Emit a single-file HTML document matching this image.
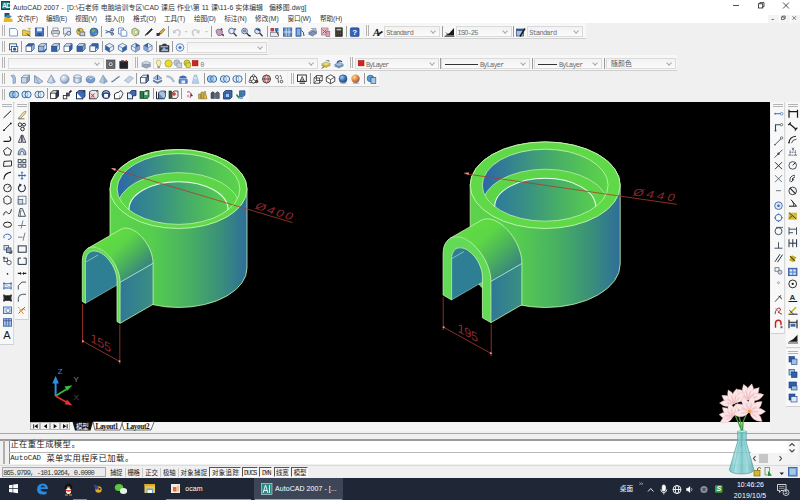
<!DOCTYPE html><html lang="zh"><head><meta charset="utf-8"><title>AutoCAD 2007</title><style>
html,body{margin:0;padding:0}
body{width:800px;height:500px;overflow:hidden;background:#f0f0f0;position:relative;font-family:'Liberation Sans','Noto Sans CJK SC',sans-serif;color:#000}
div,span{position:absolute;box-sizing:border-box;white-space:nowrap}
.tb{background:#f7f7f7;border-bottom:1px solid #cfcfcf;height:16px}
.grip{width:3px;border-left:1px solid #b4b4b4;border-right:1px solid #b4b4b4;height:11px}
.sep{width:1px;background:#9a9a9a;height:11px}
.cb{background:linear-gradient(#f2f2f2,#fbfbfb);border:1px solid #dadada;height:12px}
.cb i{position:absolute;right:3.6px;top:2.4px;width:3.2px;height:3.2px;border-right:0.8px solid #a8a8a8;border-bottom:0.8px solid #a8a8a8;transform:rotate(45deg)}
.cbt{font-family:'Liberation Mono',monospace;font-size:7px;color:#555;line-height:10px;top:0;letter-spacing:-0.2px}
.m{top:11px;height:12px;font-size:7.6px;line-height:12px;color:#111;letter-spacing:-0.1px}
.st{top:467px;height:10px;font-size:7.2px;line-height:9px;color:#111;border:1px solid #9a9a9a;text-align:center;background:#f0f0f0}
.stp{border-color:#555 #fff #fff #555;background:#f4f4f4}
.tk{color:#fff;font-size:7.6px}

</style></head><body>
<div style="left:0;top:0;width:800px;height:23px;background:#fff"></div>
<div style="left:1px;top:1px;width:9px;height:9px;background:#1f7a78;border:1px solid #0f4a4a"></div>
<div style="left:2px;top:1px;font-size:7px;line-height:9px;color:#e8f4f0;font-weight:bold;letter-spacing:-0.8px">AD</div>
<div id="t0" style="left:13px;top:2.75px;height:9.7px;line-height:9.7px;font-size:6.9px;font-family:'Liberation Sans','Noto Sans CJK SC',sans-serif;color:#333;letter-spacing:0.003px;">AutoCAD 2007</div>
<div id="t1" style="left:61.5px;top:2.75px;height:9.7px;line-height:9.7px;font-size:6.9px;font-family:'Liberation Sans','Noto Sans CJK SC',sans-serif;color:#333;letter-spacing:0.703px;">-</div>
<div id="t2" style="left:67px;top:2.55px;height:9.7px;line-height:9.7px;font-size:6.9px;font-family:'Liberation Sans','Noto Sans CJK SC',sans-serif;color:#333;letter-spacing:0.053px;">[D:\石老师 电脑培训专区\CAD 课后 作业\第 11 课\11-6 实体编辑&nbsp;&nbsp; 偏移图.dwg]</div>
<div style="left:768px;top:14.5px;width:10.5px;height:8.5px;background:#f3f3f3"></div><div style="left:779.5px;top:14.5px;width:10.5px;height:8.5px;background:#f3f3f3"></div><div style="left:791px;top:14.5px;width:9px;height:8.5px;background:#f3f3f3"></div>
<svg style="position:absolute;left:640px;top:0" width="160" height="23" viewBox="640 0 160 23"><g stroke="#222" stroke-width="0.8" fill="none"><path d="M733 5.5 H739"/><rect x="758.5" y="3.8" width="4.2" height="4.2"/><path d="M759.8 3.8 V2.6 H764 V6.8 H762.7"/><path d="M783 2.5 L789 8.5 M789 2.5 L783 8.5"/></g><g stroke="#444" stroke-width="0.7" fill="none"><path d="M771.5 19.5 H774"/><rect x="781.5" y="17" width="2.6" height="2.6"/><path d="M782.6 17 V16 H785.2 V18.6 H784.1"/><path d="M792.5 16.2 L796 19.8 M796 16.2 L792.5 19.8"/></g></svg>
<svg style="position:absolute;left:3px;top:12px" width="10" height="11" viewBox="0 0 10 11"><path d="M0.5 10 L1.5 5 L9.5 7 V10Z" fill="#e8b820"/><path d="M1.5 1 H6.5 V6 L1.5 5Z" fill="#2a4a7a"/><path d="M2 4.8 L7 6 L9 4 L4 3Z" fill="#3a8ac0"/></svg>
<div id="t3" style="left:17px;top:13.60px;height:9.4px;line-height:9.4px;font-size:6.7px;font-family:'Liberation Sans','Noto Sans CJK SC',sans-serif;color:#333;letter-spacing:-0.264px;">文件(F)</div>
<div id="t4" style="left:46px;top:13.60px;height:9.4px;line-height:9.4px;font-size:6.7px;font-family:'Liberation Sans','Noto Sans CJK SC',sans-serif;color:#333;letter-spacing:-0.259px;">编辑(E)</div>
<div id="t5" style="left:75px;top:13.60px;height:9.4px;line-height:9.4px;font-size:6.7px;font-family:'Liberation Sans','Noto Sans CJK SC',sans-serif;color:#333;letter-spacing:-0.059px;">视图(V)</div>
<div id="t6" style="left:105px;top:13.60px;height:9.4px;line-height:9.4px;font-size:6.7px;font-family:'Liberation Sans','Noto Sans CJK SC',sans-serif;color:#333;letter-spacing:-0.057px;">插入(I)</div>
<div id="t7" style="left:133px;top:13.60px;height:9.4px;line-height:9.4px;font-size:6.7px;font-family:'Liberation Sans','Noto Sans CJK SC',sans-serif;color:#333;letter-spacing:-0.006px;">格式(O)</div>
<div id="t8" style="left:164px;top:13.60px;height:9.4px;line-height:9.4px;font-size:6.7px;font-family:'Liberation Sans','Noto Sans CJK SC',sans-serif;color:#333;letter-spacing:-0.184px;">工具(T)</div>
<div id="t9" style="left:194px;top:13.60px;height:9.4px;line-height:9.4px;font-size:6.7px;font-family:'Liberation Sans','Noto Sans CJK SC',sans-serif;color:#333;letter-spacing:-0.234px;">绘图(D)</div>
<div id="t10" style="left:224.2px;top:13.60px;height:9.4px;line-height:9.4px;font-size:6.7px;font-family:'Liberation Sans','Noto Sans CJK SC',sans-serif;color:#333;letter-spacing:-0.014px;">标注(N)</div>
<div id="t11" style="left:255px;top:13.60px;height:9.4px;line-height:9.4px;font-size:6.7px;font-family:'Liberation Sans','Noto Sans CJK SC',sans-serif;color:#333;letter-spacing:0.079px;">修改(M)</div>
<div id="t12" style="left:287.5px;top:13.60px;height:9.4px;line-height:9.4px;font-size:6.7px;font-family:'Liberation Sans','Noto Sans CJK SC',sans-serif;color:#333;letter-spacing:-0.171px;">窗口(W)</div>
<div id="t13" style="left:320px;top:13.60px;height:9.4px;line-height:9.4px;font-size:6.7px;font-family:'Liberation Sans','Noto Sans CJK SC',sans-serif;color:#333;letter-spacing:-0.134px;">帮助(H)</div>
<div class="tb" style="left:0px;top:23px;width:363px"></div>
<div class="tb" style="left:364px;top:23px;width:222px"></div>
<div class="tb" style="left:0px;top:39px;width:268px"></div>
<div class="tb" style="left:0px;top:55px;width:132px"></div>
<div class="tb" style="left:133px;top:55px;width:214px"></div>
<div class="tb" style="left:348px;top:55px;width:329px"></div>
<div class="tb" style="left:0px;top:71px;width:287px"></div>
<div class="tb" style="left:288px;top:71px;width:91px"></div>
<div class="tb" style="left:0px;top:87px;width:249px"></div>
<div class="grip" style="left:2px;top:25px"></div>
<div class="sep" style="left:47px;top:25.5px"></div>
<div class="sep" style="left:101px;top:25.5px"></div>
<div class="sep" style="left:168px;top:25.5px"></div>
<div class="sep" style="left:211px;top:25.5px"></div>
<div class="sep" style="left:267px;top:25.5px"></div>
<div class="sep" style="left:346px;top:25.5px"></div>
<div class="grip" style="left:366px;top:25px"></div>
<div class="sep" style="left:441.5px;top:25.5px"></div>
<div class="sep" style="left:512.5px;top:25.5px"></div>
<div class="cb" style="left:384px;top:26px;width:56px;height:11.2px"><i></i></div>
<div id="t14" style="left:386.2px;top:29.05px;height:9.7px;line-height:9.7px;font-size:6.9px;font-family:'Liberation Mono','Noto Sans CJK SC',monospace;color:#6a6a6a;letter-spacing:-0.762px;">Standard</div>
<div class="cb" style="left:456px;top:26px;width:56px;height:11.2px"><i></i></div>
<div id="t15" style="left:457.6px;top:29.05px;height:9.7px;line-height:9.7px;font-size:6.9px;font-family:'Liberation Mono','Noto Sans CJK SC',monospace;color:#6a6a6a;letter-spacing:-0.819px;">ISO-25</div>
<div class="cb" style="left:527px;top:26px;width:56px;height:11.2px"><i></i></div>
<div id="t16" style="left:529.3px;top:29.05px;height:9.7px;line-height:9.7px;font-size:6.9px;font-family:'Liberation Mono','Noto Sans CJK SC',monospace;color:#6a6a6a;letter-spacing:-0.737px;">Standard</div>
<div class="grip" style="left:2px;top:41px"></div>
<div class="sep" style="left:21px;top:41px"></div>
<div class="sep" style="left:101.5px;top:41px"></div>
<div class="sep" style="left:155.5px;top:41px"></div>
<div class="sep" style="left:172px;top:41px"></div>
<div class="cb" style="left:187px;top:42px;width:80px;height:11.2px"><i></i></div>
<div class="grip" style="left:2px;top:57px"></div>
<div class="cb" style="left:8px;top:58px;width:96px;height:11.2px"><i></i></div>
<div class="grip" style="left:135px;top:57px"></div>
<div class="cb" style="left:153px;top:58px;width:165px;height:11.2px"><i></i></div>
<div id="t17" style="left:200.3px;top:61.05px;height:9.7px;line-height:9.7px;font-size:6.9px;font-family:'Liberation Mono','Noto Sans CJK SC',monospace;color:#777;letter-spacing:-0.841px;">0</div>
<div class="grip" style="left:350px;top:57px"></div>
<div class="cb" style="left:355px;top:58px;width:84px;height:11.2px"><i></i></div>
<div id="t18" style="left:366px;top:61.05px;height:9.7px;line-height:9.7px;font-size:6.9px;font-family:'Liberation Mono','Noto Sans CJK SC',monospace;color:#6a6a6a;letter-spacing:-0.922px;">ByLayer</div>
<div class="sep" style="left:439.5px;top:58px"></div>
<div class="cb" style="left:441px;top:58px;width:89px;height:11.2px"><i></i><span style="left:3px;top:4.5px;width:33px;height:1px;background:#333"></span></div>
<div id="t19" style="left:480px;top:61.05px;height:9.7px;line-height:9.7px;font-size:6.9px;font-family:'Liberation Mono','Noto Sans CJK SC',monospace;color:#6a6a6a;letter-spacing:-0.779px;">ByLayer</div>
<div class="sep" style="left:531.5px;top:58px"></div>
<div class="cb" style="left:534px;top:58px;width:68px;height:11.2px"><i></i><span style="left:3px;top:4.5px;width:19px;height:1px;background:#333"></span></div>
<div id="t20" style="left:559px;top:61.05px;height:9.7px;line-height:9.7px;font-size:6.9px;font-family:'Liberation Mono','Noto Sans CJK SC',monospace;color:#6a6a6a;letter-spacing:-0.779px;">ByLayer</div>
<div class="sep" style="left:604px;top:58px"></div>
<div class="cb" style="left:606px;top:58px;width:70px;height:11.2px"><i></i></div>
<div id="t21" style="left:611px;top:59.45px;height:9.5px;line-height:9.5px;font-size:6.8px;font-family:'Liberation Sans','Noto Sans CJK SC',sans-serif;color:#555;letter-spacing:0.203px;">随颜色</div>
<div class="grip" style="left:2px;top:73px"></div>
<div class="sep" style="left:136px;top:72.5px"></div>
<div class="sep" style="left:203.5px;top:72.5px"></div>
<div class="sep" style="left:245px;top:72.5px"></div>
<div class="grip" style="left:291px;top:73px"></div>
<div class="sep" style="left:309.5px;top:72.5px"></div>
<div class="sep" style="left:364px;top:72.5px"></div>
<div class="grip" style="left:2px;top:89px"></div>
<div class="sep" style="left:47px;top:88px"></div>
<div class="sep" style="left:152.5px;top:88px"></div>
<div class="sep" style="left:181px;top:88px"></div>
<div style="left:0;top:102px;width:14px;height:243px;background:#f8f8f8;border-right:1px solid #d8d8d8;border-bottom:1px solid #d0d0d0"></div>
<div style="left:15px;top:102px;width:14px;height:218px;background:#f8f8f8;border-right:1px solid #d8d8d8;border-bottom:1px solid #d0d0d0"></div>
<div style="left:771px;top:102px;width:14px;height:232px;background:#f8f8f8;border-right:1px solid #d8d8d8;border-bottom:1px solid #d0d0d0"></div>
<div style="left:786px;top:102px;width:14px;height:246px;background:#f8f8f8;border-bottom:1px solid #d0d0d0"></div>
<div style="left:786px;top:349px;width:14px;height:58px;background:#f8f8f8;border-bottom:1px solid #d0d0d0"></div>
<div style="left:2px;top:104px;width:10px;height:3px;border-top:1px solid #b4b4b4;border-bottom:1px solid #b4b4b4"></div>
<div style="left:17px;top:104px;width:10px;height:3px;border-top:1px solid #b4b4b4;border-bottom:1px solid #b4b4b4"></div>
<div style="left:773px;top:104px;width:10px;height:3px;border-top:1px solid #b4b4b4;border-bottom:1px solid #b4b4b4"></div>
<div style="left:788px;top:104px;width:10px;height:3px;border-top:1px solid #b4b4b4;border-bottom:1px solid #b4b4b4"></div>
<div style="left:788px;top:351px;width:10px;height:3px;border-top:1px solid #b4b4b4;border-bottom:1px solid #b4b4b4"></div>
<div style="left:30px;top:102.3px;width:740px;height:319.7px;background:#000"></div>
<svg width="740" height="319" viewBox="30 102 740 319" style="position:absolute;left:30px;top:102px">
<defs>
<linearGradient id="bodya" gradientUnits="userSpaceOnUse" x1="110.0" y1="0" x2="247.0" y2="0">
<stop offset="0" stop-color="#5bd44a"/><stop offset="0.3" stop-color="#56ce4e"/><stop offset="0.58" stop-color="#48b062"/><stop offset="0.8" stop-color="#3a9079"/><stop offset="1" stop-color="#2e6e9a"/></linearGradient>
<linearGradient id="inwa" gradientUnits="userSpaceOnUse" x1="117.1" y1="0" x2="239.9" y2="0">
<stop offset="0" stop-color="#2c66a8"/><stop offset="0.25" stop-color="#36868c"/><stop offset="0.55" stop-color="#46aa6a"/><stop offset="0.85" stop-color="#55c852"/><stop offset="1" stop-color="#5bd44a"/></linearGradient>
<linearGradient id="inw2a" gradientUnits="userSpaceOnUse" x1="129.0" y1="0" x2="228.0" y2="0">
<stop offset="0" stop-color="#2e7a9c"/><stop offset="0.3" stop-color="#388f84"/><stop offset="0.6" stop-color="#46ac68"/><stop offset="0.9" stop-color="#54c654"/><stop offset="1" stop-color="#58cc50"/></linearGradient>
<linearGradient id="htopa" gradientUnits="userSpaceOnUse" x1="103.6" y1="237.4" x2="136.6" y2="272.8">
<stop offset="0" stop-color="#60dc42"/><stop offset="0.35" stop-color="#5cd646"/><stop offset="0.7" stop-color="#4ab05c"/><stop offset="1" stop-color="#3a8a7c"/></linearGradient>
<linearGradient id="hwalla" gradientUnits="userSpaceOnUse" x1="120.1" y1="0" x2="153.1" y2="0">
<stop offset="0" stop-color="#2f7896"/><stop offset="1" stop-color="#3a8f82"/></linearGradient>
</defs>
<path d="M110.0 189 A68.5 39.5 0 0 1 247.0 189 L247.0 268 A68.5 39.5 0 0 1 110.0 268Z" fill="url(#bodya)" stroke="#c8f5b0" stroke-width="0.8"/>
<ellipse cx="178.5" cy="189" rx="68.5" ry="39.5" fill="#5fd948" stroke="#c8f5b0" stroke-width="0.9"/>
<clipPath id="cina"><ellipse cx="178.5" cy="189" rx="61.4" ry="35.4"/></clipPath>
<g clip-path="url(#cina)">
<rect x="117.1" y="153.6" width="122.8" height="70.8" fill="url(#inwa)"/>
<ellipse cx="178.5" cy="208" rx="61.4" ry="35.4" fill="#5cd548" stroke="#c8f5b0" stroke-width="0.7"/>
<ellipse cx="178.5" cy="209.5" rx="49.5" ry="27.8" fill="url(#inw2a)" stroke="#e8fff0" stroke-width="1.1"/>
</g>
<ellipse cx="178.5" cy="189" rx="61.4" ry="35.4" fill="none" stroke="#c8f5b0" stroke-width="0.8"/>
<path d="M87.9 248.3 L120.9 229.3 L122.7 228.5 L124.8 228.1 L127.0 228.1 L129.3 228.6 L131.7 229.4 L134.2 230.6 L136.7 232.2 L139.1 234.2 L141.4 236.5 L143.6 239.0 L145.7 241.8 L147.5 244.7 L149.2 247.8 L150.5 250.9 L151.6 254.1 L152.4 257.3 L152.9 260.3 L153.1 263.3 L120.1 282.3 L119.9 279.3 L119.4 276.3 L118.6 273.1 L117.5 269.9 L116.2 266.8 L114.5 263.7 L112.7 260.8 L110.6 258.0 L108.4 255.5 L106.1 253.2 L103.7 251.2 L101.2 249.6 L98.7 248.4 L96.3 247.6 L94.0 247.1 L91.8 247.1 L89.7 247.5 L87.9 248.3Z" fill="url(#htopa)"/>
<path d="M120.1 282.3 L153.1 263.3 L153.1 304.3 L120.1 323.3Z" fill="url(#hwalla)"/>
<path d="M85.4 303.3 L85.4 262.3 L85.5 260.0 L85.9 257.9 L86.6 256.0 L87.5 254.4 L88.7 253.1 L90.0 252.0 L91.6 251.4 L93.3 251.0 L95.2 251.1 L97.1 251.4 L99.1 252.1 L101.2 253.2 L103.3 254.5 L105.3 256.1 L107.2 258.0 L109.1 260.2 L110.8 262.5 L112.4 264.9 L113.7 267.5 L114.9 270.2 L115.8 272.8 L116.5 275.5 L116.9 278.1 L117.0 280.5 L117.0 285.0Z" fill="#2f7f94"/>
<path d="M85.4 262.3 l12.6 -7.3" stroke="#9fdcc8" stroke-width="0.7" fill="none"/>
<path d="M82.3 301.5 L82.3 260.5 L82.5 257.8 L83.0 255.3 L83.8 253.0 L84.9 251.1 L86.2 249.5 L87.9 248.3 L89.7 247.5 L91.8 247.1 L94.0 247.1 L96.3 247.6 L98.7 248.4 L101.2 249.6 L103.7 251.2 L106.1 253.2 L108.4 255.5 L110.6 258.0 L112.7 260.8 L114.5 263.7 L116.2 266.8 L117.5 269.9 L118.6 273.1 L119.4 276.3 L119.9 279.3 L120.1 282.3 L120.1 323.3 L117.0 321.5 L117.0 280.5 L116.9 278.1 L116.5 275.5 L115.8 272.8 L114.9 270.2 L113.7 267.5 L112.4 264.9 L110.8 262.5 L109.1 260.2 L107.2 258.0 L105.3 256.1 L103.3 254.5 L101.2 253.2 L99.1 252.1 L97.1 251.4 L95.2 251.1 L93.3 251.0 L91.6 251.4 L90.0 252.0 L88.7 253.1 L87.5 254.4 L86.6 256.0 L85.9 257.9 L85.5 260.0 L85.4 262.3 L85.4 303.3Z" fill="#62da58" stroke="#c8f5b0" stroke-width="0.8" stroke-linejoin="round"/>
<path d="M87.9 248.3 L120.9 229.3 L122.7 228.5 L124.8 228.1 L127.0 228.1 L129.3 228.6 L131.7 229.4 L134.2 230.6 L136.7 232.2 L139.1 234.2 L141.4 236.5 L143.6 239.0 L145.7 241.8 L147.5 244.7 L149.2 247.8 L150.5 250.9 L151.6 254.1 L152.4 257.3 L152.9 260.3 L153.1 263.3 L153.1 304.3 L120.1 323.3" fill="none" stroke="#c8f5b0" stroke-width="0.8"/>
<path d="M120.1 282.3 L153.1 263.3" stroke="#bfeee0" stroke-width="0.8"/>
<path d="M85.4 303.3 L117.0 285.0" stroke="#9fdcc8" stroke-width="0.6"/>
<defs>
<linearGradient id="bodyb" gradientUnits="userSpaceOnUse" x1="470.20000000000005" y1="0" x2="620.2" y2="0">
<stop offset="0" stop-color="#5bd44a"/><stop offset="0.3" stop-color="#56ce4e"/><stop offset="0.58" stop-color="#48b062"/><stop offset="0.8" stop-color="#3a9079"/><stop offset="1" stop-color="#2e6e9a"/></linearGradient>
<linearGradient id="inwb" gradientUnits="userSpaceOnUse" x1="482.30000000000007" y1="0" x2="608.1" y2="0">
<stop offset="0" stop-color="#2c66a8"/><stop offset="0.25" stop-color="#36868c"/><stop offset="0.55" stop-color="#46aa6a"/><stop offset="0.85" stop-color="#55c852"/><stop offset="1" stop-color="#5bd44a"/></linearGradient>
<linearGradient id="inw2b" gradientUnits="userSpaceOnUse" x1="494.70000000000005" y1="0" x2="595.7" y2="0">
<stop offset="0" stop-color="#2e7a9c"/><stop offset="0.3" stop-color="#388f84"/><stop offset="0.6" stop-color="#46ac68"/><stop offset="0.9" stop-color="#54c654"/><stop offset="1" stop-color="#58cc50"/></linearGradient>
<linearGradient id="htopb" gradientUnits="userSpaceOnUse" x1="464.6" y1="227.6" x2="506.4" y2="272.4">
<stop offset="0" stop-color="#60dc42"/><stop offset="0.35" stop-color="#5cd646"/><stop offset="0.7" stop-color="#4ab05c"/><stop offset="1" stop-color="#3a8a7c"/></linearGradient>
<linearGradient id="hwallb" gradientUnits="userSpaceOnUse" x1="490.9" y1="0" x2="521.9" y2="0">
<stop offset="0" stop-color="#2f7896"/><stop offset="1" stop-color="#3a8f82"/></linearGradient>
</defs>
<path d="M470.20000000000005 185.2 A75 43.3 0 0 1 620.2 185.2 L620.2 264.2 A75 43.3 0 0 1 470.20000000000005 264.2Z" fill="url(#bodyb)" stroke="#c8f5b0" stroke-width="0.8"/>
<ellipse cx="545.2" cy="185.2" rx="75" ry="43.3" fill="#5fd948" stroke="#c8f5b0" stroke-width="0.9"/>
<clipPath id="cinb"><ellipse cx="545.2" cy="185.2" rx="62.9" ry="36.0"/></clipPath>
<g clip-path="url(#cinb)">
<rect x="482.30000000000007" y="149.2" width="125.8" height="72.0" fill="url(#inwb)"/>
<ellipse cx="545.2" cy="205.2" rx="62.9" ry="36.0" fill="#5cd548" stroke="#c8f5b0" stroke-width="0.7"/>
<ellipse cx="545.2" cy="206.7" rx="50.5" ry="28.4" fill="url(#inw2b)" stroke="#e8fff0" stroke-width="1.1"/>
</g>
<ellipse cx="545.2" cy="185.2" rx="62.9" ry="36.0" fill="none" stroke="#c8f5b0" stroke-width="0.8"/>
<path d="M450.1 238.3 L481.1 220.4 L483.5 219.4 L486.1 218.9 L488.9 218.9 L491.8 219.5 L494.9 220.5 L498.0 222.1 L501.1 224.1 L504.2 226.6 L507.1 229.5 L509.9 232.7 L512.5 236.2 L514.9 239.9 L517.0 243.8 L518.7 247.9 L520.1 251.9 L521.1 255.9 L521.7 259.8 L521.9 263.5 L490.9 281.4 L490.7 277.7 L490.1 273.8 L489.1 269.8 L487.7 265.8 L486.0 261.7 L483.9 257.8 L481.5 254.1 L478.9 250.6 L476.1 247.4 L473.2 244.5 L470.1 242.0 L467.0 240.0 L463.9 238.4 L460.8 237.4 L457.9 236.8 L455.1 236.8 L452.5 237.3 L450.1 238.3Z" fill="url(#htopb)"/>
<path d="M490.9 281.4 L521.9 263.5 L521.9 304.7 L490.9 322.6Z" fill="url(#hwallb)"/>
<path d="M451.6 299.9 L451.6 258.7 L451.7 256.5 L452.1 254.4 L452.8 252.6 L453.7 251.0 L454.8 249.7 L456.1 248.7 L457.6 248.1 L459.3 247.8 L461.1 247.8 L463.0 248.1 L465.0 248.8 L467.0 249.8 L469.0 251.1 L471.0 252.7 L472.9 254.6 L474.7 256.6 L476.4 258.9 L477.9 261.3 L479.2 263.8 L480.3 266.4 L481.2 269.0 L481.9 271.6 L482.3 274.1 L482.4 276.5 L482.4 282.1Z" fill="#2f7f94"/>
<path d="M451.6 258.7 l12.3 -7.1" stroke="#9fdcc8" stroke-width="0.7" fill="none"/>
<path d="M443.1 295.0 L443.1 253.8 L443.3 250.3 L443.9 247.1 L444.9 244.3 L446.3 241.9 L448.0 239.9 L450.1 238.3 L452.5 237.3 L455.1 236.8 L457.9 236.8 L460.8 237.4 L463.9 238.4 L467.0 240.0 L470.1 242.0 L473.2 244.5 L476.1 247.4 L478.9 250.6 L481.5 254.1 L483.9 257.8 L486.0 261.7 L487.7 265.8 L489.1 269.8 L490.1 273.8 L490.7 277.7 L490.9 281.4 L490.9 322.6 L482.4 317.7 L482.4 276.5 L482.3 274.1 L481.9 271.6 L481.2 269.0 L480.3 266.4 L479.2 263.8 L477.9 261.3 L476.4 258.9 L474.7 256.6 L472.9 254.6 L471.0 252.7 L469.0 251.1 L467.0 249.8 L465.0 248.8 L463.0 248.1 L461.1 247.8 L459.3 247.8 L457.6 248.1 L456.1 248.7 L454.8 249.7 L453.7 251.0 L452.8 252.6 L452.1 254.4 L451.7 256.5 L451.6 258.7 L451.6 299.9Z" fill="#62da58" stroke="#c8f5b0" stroke-width="0.8" stroke-linejoin="round"/>
<path d="M450.1 238.3 L481.1 220.4 L483.5 219.4 L486.1 218.9 L488.9 218.9 L491.8 219.5 L494.9 220.5 L498.0 222.1 L501.1 224.1 L504.2 226.6 L507.1 229.5 L509.9 232.7 L512.5 236.2 L514.9 239.9 L517.0 243.8 L518.7 247.9 L520.1 251.9 L521.1 255.9 L521.7 259.8 L521.9 263.5 L521.9 304.7 L490.9 322.6" fill="none" stroke="#c8f5b0" stroke-width="0.8"/>
<path d="M490.9 281.4 L521.9 263.5" stroke="#bfeee0" stroke-width="0.8"/>
<path d="M451.6 299.9 L482.4 282.1" stroke="#9fdcc8" stroke-width="0.6"/>
<g stroke="#b03a2c" stroke-width="0.8" fill="none"><path d="M111.5 168.7 L292.5 222.6"/><path d="M82.5 304 V343 M119.8 325 V364 M82.5 341 L119.8 361.5"/><path d="M464 173.6 L677 204.3"/><path d="M443.2 297 V330 M491.2 324 V356 M443.2 327 L491.2 353.5"/></g>
<g fill="#e8a0a0"><path d="M111 168 l5 0.5 l-1 2.5z"/><path d="M464 172.8 l5 -0.3 l-0.5 2.6z"/><circle cx="83" cy="341.3" r="1"/><circle cx="119.5" cy="361.2" r="1"/><circle cx="443.6" cy="327.3" r="1"/><circle cx="490.8" cy="353.2" r="1"/></g>
<g fill="#8e2830" style="font-family:'Liberation Sans',sans-serif" font-size="10.5"><text transform="translate(254,208.6) rotate(17.5) scale(1.25,1) skewX(-12)" letter-spacing="1.7">Ø400</text><text transform="translate(90.5,341.5) skewY(29)" font-size="12.6" letter-spacing="-0.3">155</text><text transform="translate(632,195.2) rotate(8.3) scale(1.25,1) skewX(-12)" letter-spacing="2.6">Ø440</text><text transform="translate(457.6,331.4) skewY(29)" font-size="12.6" letter-spacing="-0.3">195</text></g>
<g><path d="M55.6 396 V381" stroke="#2f8fe8" stroke-width="2"/><path d="M52.3 383.5 L55.6 376 L58.9 383.5Z" fill="#2f8fe8"/><path d="M55.6 396 L66 389.5" stroke="#35c035" stroke-width="1.6"/><path d="M64.5 386.5 L72.5 385.3 L67 391Z" fill="#35c035"/><path d="M55.6 396 L66 402" stroke="#e03030" stroke-width="1.6"/><path d="M67 399.5 L72.5 405.5 L64.5 404.2Z" fill="#e03030"/><text x="57.8" y="373.5" font-size="8" fill="#3a8fe0" style="font-family:'Liberation Sans',sans-serif">Z</text><text x="73.5" y="382" font-size="8" fill="#8a8a8a" style="font-family:'Liberation Sans',sans-serif">Y</text><text x="73.5" y="399.5" font-size="8" fill="#7a3a30" style="font-family:'Liberation Sans',sans-serif">X</text></g>
</svg>
<div style="left:30px;top:422px;width:740px;height:8.5px;background:#f4f4f4"></div>
<div style="left:30px;top:422px;width:10px;height:8.3px;border:1px solid #b8b8b8;background:#f2f2f2"></div>
<div style="left:40px;top:422px;width:10px;height:8.3px;border:1px solid #b8b8b8;background:#f2f2f2"></div>
<div style="left:50px;top:422px;width:10px;height:8.3px;border:1px solid #b8b8b8;background:#f2f2f2"></div>
<div style="left:60px;top:422px;width:10px;height:8.3px;border:1px solid #b8b8b8;background:#f2f2f2"></div>
<svg style="position:absolute;left:30px;top:421px" width="130" height="11" viewBox="30 421 130 11"><g fill="#111"><path d="M33.2 424.2 V428.4 h0.9 V424.2Z M37.7 424 V428.6 L34.4 426.3Z"/><path d="M47 424 V428.6 L43.7 426.3Z"/><path d="M53.7 424 V428.6 L57 426.3Z"/><path d="M63 424 V428.6 L66.3 426.3Z M66.7 424.2 V428.4 h0.9 V424.2Z"/></g><path d="M72.5 421.8 L75 430.4 H90.5 L93 421.8Z" fill="#111"/><path d="M93 421.8 L95 430 H120 L122.6 421.8 M122 423.5 L124 430 H151 L154 421.8" fill="#fff" stroke="#333" stroke-width="0.7"/></svg>
<div id="t22" style="left:76px;top:421.65px;height:9.1px;line-height:9.1px;font-size:6.5px;font-family:'Liberation Sans','Noto Sans CJK SC',sans-serif;color:#fff;letter-spacing:-0.200px;">模型</div>
<div id="t23" style="left:95.6px;top:421.65px;height:10.1px;line-height:10.1px;font-size:7.2px;font-family:'Liberation Serif',serif;color:#111;letter-spacing:-0.452px;font-weight:bold;">Layout1</div>
<div id="t24" style="left:126.2px;top:421.65px;height:10.1px;line-height:10.1px;font-size:7.2px;font-family:'Liberation Serif',serif;color:#111;letter-spacing:-0.366px;font-weight:bold;">Layout2</div>
<div style="left:0;top:432.6px;width:800px;height:1.6px;background:#a6a6a6"></div>
<div style="left:0;top:439px;width:800px;height:1.6px;background:#9a9a9a"></div>
<div style="left:9px;top:440.5px;width:789px;height:23.5px;background:#fff;border-left:1px solid #888"></div>
<div style="left:9px;top:451.8px;width:742px;height:1.2px;background:#b8b8b8"></div>
<div style="left:3px;top:440px;width:2px;height:24px;border-left:1px solid #b0b0b0;border-right:1px solid #b0b0b0"></div>
<div id="t25" style="left:10.4px;top:438.50px;height:11.6px;line-height:11.6px;font-size:8.3px;font-family:'Liberation Mono','Noto Sans CJK SC',monospace;color:#222;letter-spacing:0.387px;">正在重生成模型</div>
<div id="t26" style="left:71.5px;top:438.50px;height:11.6px;line-height:11.6px;font-size:8.3px;font-family:'Liberation Mono','Noto Sans CJK SC',monospace;color:#222;letter-spacing:0.188px;">。</div>
<div id="t27" style="left:10.2px;top:453.10px;height:10.4px;line-height:10.4px;font-size:7.4px;font-family:'Liberation Mono','Noto Sans CJK SC',monospace;color:#222;letter-spacing:-0.035px;">AutoCAD</div>
<div id="t28" style="left:46.4px;top:452.50px;height:11.6px;line-height:11.6px;font-size:8.3px;font-family:'Liberation Mono','Noto Sans CJK SC',monospace;color:#222;letter-spacing:0.390px;">菜单实用程序已加载</div>
<div id="t29" style="left:125px;top:452.50px;height:11.6px;line-height:11.6px;font-size:8.3px;font-family:'Liberation Mono','Noto Sans CJK SC',monospace;color:#222;letter-spacing:-0.312px;">。</div>
<div style="left:787px;top:440.6px;width:11px;height:12px;background:#f8f8f8"></div>
<div style="left:751px;top:453px;width:47px;height:11px;background:#f3f3f3"></div>
<div style="left:758.5px;top:454px;width:9.5px;height:9px;background:#c6c6c6"></div>
<svg style="position:absolute;left:750px;top:440px" width="50" height="25" viewBox="750 440 50 25"><g fill="none" stroke="#444" stroke-width="1.1"><path d="M789.5 446 L792 443.5 L794.5 446"/><path d="M789.5 449.5 L792 452 L794.5 449.5"/><path d="M755.5 456 L753.5 458.5 L755.5 461"/><path d="M779.5 456 L781.5 458.5 L779.5 461"/></g></svg>
<div style="left:0;top:465px;width:800px;height:13px;background:#f0f0f0;border-top:1px solid #dcdcdc"></div>
<div style="left:2px;top:467px;width:104px;height:10px;border:1px solid #a8a8a8;background:#ebebeb"></div>
<div id="t30" style="left:3.2px;top:468.70px;height:9.8px;line-height:9.8px;font-size:7px;font-family:'Liberation Mono','Noto Sans CJK SC',monospace;color:#333;letter-spacing:-0.838px;">865.9799, -101.9264, 0.0000</div>
<div style="left:124.5px;top:468px;width:1px;height:9px;background:#c8c8c8"></div>
<div id="t31" style="left:110px;top:467.70px;height:9.0px;line-height:9.0px;font-size:6.4px;font-family:'Liberation Sans','Noto Sans CJK SC',sans-serif;color:#222;letter-spacing:-0.491px;">捕捉</div>
<div style="left:142px;top:468px;width:1px;height:9px;background:#c8c8c8"></div>
<div id="t32" style="left:127.4px;top:467.70px;height:9.0px;line-height:9.0px;font-size:6.4px;font-family:'Liberation Sans','Noto Sans CJK SC',sans-serif;color:#222;letter-spacing:-0.291px;">栅格</div>
<div style="left:160.0px;top:468px;width:1px;height:9px;background:#c8c8c8"></div>
<div id="t33" style="left:145.2px;top:467.70px;height:9.0px;line-height:9.0px;font-size:6.4px;font-family:'Liberation Sans','Noto Sans CJK SC',sans-serif;color:#222;letter-spacing:-0.191px;">正交</div>
<div style="left:178.0px;top:468px;width:1px;height:9px;background:#c8c8c8"></div>
<div id="t34" style="left:163px;top:467.70px;height:9.0px;line-height:9.0px;font-size:6.4px;font-family:'Liberation Sans','Noto Sans CJK SC',sans-serif;color:#222;letter-spacing:-0.091px;">极轴</div>
<div style="left:209.0px;top:468px;width:1px;height:9px;background:#c8c8c8"></div>
<div id="t35" style="left:180.5px;top:467.70px;height:9.0px;line-height:9.0px;font-size:6.4px;font-family:'Liberation Sans','Noto Sans CJK SC',sans-serif;color:#222;letter-spacing:0.334px;">对象捕捉</div>
<div class="st stp" style="left:209.4px;width:31.3px"></div>
<div id="t36" style="left:212px;top:467.70px;height:9.0px;line-height:9.0px;font-size:6.4px;font-family:'Liberation Sans','Noto Sans CJK SC',sans-serif;color:#222;letter-spacing:0.409px;">对象追踪</div>
<div class="st stp" style="left:241.6px;width:16.4px"></div>
<div id="t37" style="left:244px;top:468.95px;height:9.5px;line-height:9.5px;font-size:6.8px;font-family:'Liberation Mono','Noto Sans CJK SC',monospace;color:#222;letter-spacing:-1.007px;">DUCS</div>
<div class="st stp" style="left:259.3px;width:12.7px"></div>
<div id="t38" style="left:262px;top:468.95px;height:9.5px;line-height:9.5px;font-size:6.8px;font-family:'Liberation Mono','Noto Sans CJK SC',monospace;color:#222;letter-spacing:-1.283px;">DYN</div>
<div class="st stp" style="left:274px;width:16.2px"></div>
<div id="t39" style="left:276px;top:467.70px;height:9.0px;line-height:9.0px;font-size:6.4px;font-family:'Liberation Sans','Noto Sans CJK SC',sans-serif;color:#222;letter-spacing:-0.141px;">线宽</div>
<div class="st stp" style="left:291.4px;width:16.6px"></div>
<div id="t40" style="left:293.8px;top:467.70px;height:9.0px;line-height:9.0px;font-size:6.4px;font-family:'Liberation Sans','Noto Sans CJK SC',sans-serif;color:#222;letter-spacing:-0.091px;">模型</div>
<svg style="position:absolute;left:750px;top:465px" width="50" height="13" viewBox="750 465 50 13"><rect x="754" y="470.5" width="6" height="5.5" fill="#d8b820" stroke="#6a5a10" stroke-width="0.6"/><path d="M757.5 470.5 V468.5 Q759.5 466.5 761 468.5" fill="none" stroke="#6a5a10" stroke-width="1"/><rect x="765" y="467.5" width="4.5" height="7.5" fill="#e8f0e8" stroke="#3a6a3a" stroke-width="0.6"/><path d="M768 471 L772 475.5 L768 476Z" fill="#2a8a3a"/><path d="M779.5 472.5 H784 L781.7 475Z" fill="#222"/><rect x="788.5" y="467.5" width="8.5" height="8.5" fill="#7aa8d8" stroke="#3a6aa8" stroke-width="1"/><rect x="790" y="469" width="5.5" height="5.5" fill="#a8c8e8"/></svg>
<div style="left:0;top:478px;width:800px;height:22px;background:#1f2635"></div>
<div style="left:254px;top:478px;width:89px;height:22px;background:#3d4656"></div>
<div style="left:255px;top:498.5px;width:87px;height:1.5px;background:#8fa8d0"></div>
<div style="left:166px;top:498.8px;width:85px;height:1.2px;background:#7f98c0"></div>
<div style="left:73px;top:499px;width:14px;height:1px;background:#6f88b0"></div>
<svg style="position:absolute;left:0;top:478px" width="800" height="22" viewBox="0 478 800 22"><g fill="#fff"><path d="M9 485.2 L12.6 484.7 V488.3 H9Z M13.2 484.6 L18 483.9 V488.3 H13.2Z M9 488.9 H12.6 V492.5 L9 492Z M13.2 488.9 H18 V493.3 L13.2 492.6Z"/></g><path d="M37 490 Q37 483.5 43 483.5 Q48 484 48 489 H40.5 Q41 492.5 46.5 491.5 V494 Q38 496 37 490Z M40.5 487.3 H45 Q44.5 485.5 42.7 485.5 Q41 485.7 40.5 487.3Z" fill="#2a8ae0" fill-rule="evenodd"/><ellipse cx="68.5" cy="488.5" rx="4" ry="5" fill="#111"/><ellipse cx="68.5" cy="491" rx="2.6" ry="3" fill="#fff"/><path d="M64.5 489 Q68.5 491.5 72.5 489 L72 490.5 Q68.5 492.8 65 490.5Z" fill="#e02020"/><ellipse cx="68.5" cy="487.2" rx="1.8" ry="0.7" fill="#f0a020"/><path d="M65 494.5 h3 v1 h-3z M69 494.5 h3 v1 h-3z" fill="#f0a020"/><circle cx="98.5" cy="489.5" r="3.2" fill="#e8a828"/><path d="M93.5 485 Q97 484 99 488 L96 490Z" fill="#2a4a98"/><circle cx="99.5" cy="489" r="1" fill="#222"/><ellipse cx="119" cy="487.5" rx="4.2" ry="3.5" fill="#5ac838"/><ellipse cx="123.5" cy="491" rx="3.6" ry="3" fill="#e8f4e4"/><rect x="144.5" y="484" width="10.5" height="9" fill="#f0c848"/><rect x="144.5" y="484" width="10.5" height="2" fill="#e0a828"/><rect x="146.5" y="488.5" width="6.5" height="4.5" fill="#5aa8e8"/><rect x="147.5" y="490" width="4.5" height="3" fill="#f4f4f4"/><rect x="171" y="484" width="9" height="9" fill="#f0ece4"/><rect x="173" y="487" width="3.5" height="4.5" fill="#e86838"/><rect x="177.5" y="485.5" width="1.2" height="6" fill="#e8a848"/><rect x="261.5" y="483.5" width="10.5" height="11" fill="#2a8a88" stroke="#cfe8e4" stroke-width="0.6"/><path d="M263 493 L265.5 485 L268 493 M264 490.5 H267 M269.5 485 V493" stroke="#e8f4f0" stroke-width="1" fill="none"/><g stroke="#fff" stroke-width="0.9" fill="none"><path d="M648 491.5 L650.7 488.5 L653.4 491.5"/><rect x="662.3" y="485" width="3" height="6" rx="1.5" fill="#fff"/><path d="M660.8 489.5 Q661 492.5 663.8 492.5 Q666.6 492.5 666.8 489.5 M663.8 492.5 V494.3"/><circle cx="677" cy="489.5" r="4"/><ellipse cx="677" cy="489.5" rx="1.8" ry="4"/><path d="M673 489.5 H681"/><path d="M686.5 488.3 H688 L690 486.5 V492.5 L688 490.8 H686.5Z" fill="#fff" stroke-width="0.4"/><path d="M691.5 488 Q692.5 489.5 691.5 491" stroke-width="0.6"/></g><circle cx="704" cy="489.5" r="3.6" fill="#8a8f98"/><path d="M702.5 488 L705.5 491 M705.5 488 L702.5 491" stroke="#1f2635" stroke-width="0.9"/><rect x="715" y="485.3" width="7.5" height="7.5" rx="1.3" fill="#28a838"/><path d="M639.5 482.5 l1.2 1.2 l-1.2 1.2 M641.5 482.5 l1.2 1.2 l-1.2 1.2" stroke="#fff" stroke-width="0.6" fill="none"/><path d="M777.5 484.5 H786 V490.5 H781 L779.5 492.5 V490.5 H777.5Z" fill="none" stroke="#fff" stroke-width="0.8"/><path d="M779 486.5 H784.5 M779 488.3 H784.5" stroke="#fff" stroke-width="0.5"/><circle cx="786" cy="492.5" r="3" fill="#1f2635" stroke="#fff" stroke-width="0.7"/></svg>
<div class="tk" style="left:716.6px;top:485px;font-size:7px;line-height:8px;font-weight:bold;font-style:italic;color:#fff">S</div>
<div class="tk" style="left:784.6px;top:489px;font-size:5px;line-height:7px">5</div>
<div id="t41" style="left:185.3px;top:483.90px;height:9.8px;line-height:9.8px;font-size:7px;font-family:'Liberation Sans','Noto Sans CJK SC',sans-serif;color:#fff;letter-spacing:0.044px;">ocam</div>
<div id="t42" style="left:275px;top:483.90px;height:9.8px;line-height:9.8px;font-size:7px;font-family:'Liberation Sans','Noto Sans CJK SC',sans-serif;color:#fff;letter-spacing:0.058px;">AutoCAD 2007 - [...</div>
<div id="t43" style="left:619.8px;top:484.40px;height:9.2px;line-height:9.2px;font-size:6.6px;font-family:'Liberation Sans','Noto Sans CJK SC',sans-serif;color:#fff;letter-spacing:0.006px;">桌面</div>
<div id="t44" style="left:737px;top:479.55px;height:9.7px;line-height:9.7px;font-size:6.9px;font-family:'Liberation Sans','Noto Sans CJK SC',sans-serif;color:#fff;letter-spacing:-0.004px;">10:46:26</div>
<div id="t45" style="left:733.8px;top:490.65px;height:9.7px;line-height:9.7px;font-size:6.9px;font-family:'Liberation Sans','Noto Sans CJK SC',sans-serif;color:#fff;letter-spacing:0.216px;">2019/10/5</div>
<svg style="position:absolute;left:0;top:0" width="800" height="110" viewBox="0 0 800 110"><defs><radialGradient id="gsph" cx="0.35" cy="0.3" r="0.8"><stop offset="0" stop-color="#f4f7fc"/><stop offset="0.6" stop-color="#a8bad8"/><stop offset="1" stop-color="#6a80b0"/></radialGradient><linearGradient id="gcyl" x1="0" x2="1" y1="0" y2="0"><stop offset="0" stop-color="#9ab0d0"/><stop offset="0.4" stop-color="#eef2f8"/><stop offset="1" stop-color="#8aa0c4"/></linearGradient><radialGradient id="gblue" cx="0.35" cy="0.3" r="0.8"><stop offset="0" stop-color="#a8d0f0"/><stop offset="0.5" stop-color="#3a78c0"/><stop offset="1" stop-color="#1a3a78"/></radialGradient><radialGradient id="gorange" cx="0.35" cy="0.3" r="0.8"><stop offset="0" stop-color="#fcd8a0"/><stop offset="0.5" stop-color="#e88830"/><stop offset="1" stop-color="#5a4a8a"/></radialGradient></defs><g transform="translate(9,27.5)"><path d="M0.6 1 H6.5 L8.5 3 V8.5 H0.6Z" fill="#fdfdff" stroke="#6f8fb8" stroke-width="0.9"/></g><g transform="translate(22,27.5)"><path d="M0.5 2.5 H3.5 L4.5 3.5 H8 V8 H0.5Z" fill="#e9c84a" stroke="#9a8230" stroke-width="0.7"/><path d="M5.5 1 L8.5 0.5 L7.5 3" fill="#f4e38a" stroke="#9a8230" stroke-width="0.5"/><path d="M5 6 L8 9" stroke="#222" stroke-width="1"/></g><g transform="translate(35,27.5)"><rect x="0.5" y="0.5" width="8" height="8" fill="#4a78c0" stroke="#2f4f90" stroke-width="0.8"/><rect x="2" y="0.8" width="5" height="3" fill="#dfe8f5"/><rect x="2.5" y="5.5" width="4" height="3" fill="#2f4f90"/></g><g transform="translate(51,27.5)"><rect x="2" y="0.5" width="5" height="3" fill="#fff" stroke="#778" stroke-width="0.7"/><rect x="0.5" y="3.2" width="8" height="3.6" rx="0.8" fill="#c8cdd8" stroke="#667" stroke-width="0.8"/><rect x="2" y="6" width="5" height="2.6" fill="#fff" stroke="#778" stroke-width="0.6"/></g><g transform="translate(63,27.5)"><rect x="0.5" y="0.5" width="7" height="6" fill="#e8edf5" stroke="#6a7fa0" stroke-width="0.8"/><circle cx="5.8" cy="5.8" r="2" fill="#cfe0f5" stroke="#556" stroke-width="0.8"/><path d="M3 7 L1.5 9" stroke="#556" stroke-width="1"/></g><g transform="translate(76,27.5)"><circle cx="4" cy="4" r="3.3" fill="#e8d050" stroke="#7a7040" stroke-width="0.8"/><rect x="4" y="4.5" width="4.8" height="3.8" fill="#c8ccd5" stroke="#555" stroke-width="0.7"/><circle cx="3" cy="3" r="1.2" fill="#6a7a40"/></g><g transform="translate(89.5,27.5)"><circle cx="4.5" cy="4.5" r="4" fill="#4a80c8" stroke="#2a4f80" stroke-width="0.7"/><path d="M2 3 Q4 1 6 2.5 Q5 5 3 5Z" fill="#7ab06a"/><path d="M5 6 Q7 5 8 6 L6 8Z" fill="#7ab06a"/><path d="M0.5 8 Q3 9.5 5 8.5" stroke="#889" stroke-width="0.9" fill="none"/></g><g transform="translate(105,27.5)"><path d="M0.5 3 L8 6 M0.5 5.5 L8 2.5" stroke="#4a6a9a" stroke-width="1"/><circle cx="7.3" cy="2.3" r="1.3" fill="none" stroke="#3a5080" stroke-width="0.9"/><circle cx="7.3" cy="6.4" r="1.3" fill="none" stroke="#3a5080" stroke-width="0.9"/></g><g transform="translate(118,27.5)"><path d="M0.5 0.5 H5.5 V6.5 H0.5Z" fill="#f4f7fc" stroke="#5a7fb5" stroke-width="0.8"/><path d="M3 2.5 H7 L8.8 4.2 V8.7 H3Z" fill="#fbfcff" stroke="#5a7fb5" stroke-width="0.8"/></g><g transform="translate(131,27.5)"><path d="M1 2 L4 0.5 L8 3 L7.5 7 L3.5 8.5 L1 6Z" fill="#d9e2a0" stroke="#7a8a60" stroke-width="0.9"/><path d="M3 3.5 L6 3 L6.5 6 L4 6.5Z" fill="#f7f7ee" stroke="#8a9070" stroke-width="0.5"/></g><g transform="translate(144,27.5)"><path d="M1 8 L3 5.5 L7.5 1 L8.5 2 L4 6.5Z" fill="#2a2a30" stroke="#2a2a30" stroke-width="0.6"/></g><g transform="translate(156,27.5)"><path d="M1 8.5 L3.5 5 L5 6.5Z" fill="#2a2a30"/><path d="M3.5 5 L7.5 0.8 L9 2.3 L5 6.5Z" fill="#e0b030" stroke="#5a4a20" stroke-width="0.6"/><rect x="0.5" y="5.5" width="3" height="3" fill="#3a3040"/></g><g transform="translate(172,27.5)"><path d="M2 4.5 Q5 0.5 8 4 Q8.5 6.5 6.5 8.5" fill="none" stroke="#c4c8d0" stroke-width="1.5"/><path d="M0.5 2.5 L1.5 6.5 L4.5 4.5Z" fill="#c4c8d0"/></g><g transform="translate(184.5,27.5)"><path d="M0 3.5 H3 L1.5 5.2Z" fill="#c0c4cc"/></g><g transform="translate(191.5,27.5)"><path d="M7 4.5 Q4 0.5 1 4 Q0.5 6.5 2.5 8.5" fill="none" stroke="#c4c8d0" stroke-width="1.5"/><path d="M8.5 2.5 L7.5 6.5 L4.5 4.5Z" fill="#c4c8d0"/></g><g transform="translate(205,27.5)"><path d="M0 3.5 H3 L1.5 5.2Z" fill="#c0c4cc"/></g><g transform="translate(215,27.5)"><path d="M1 3 Q3 0.5 5 2 L7.5 3.5 Q8 6 6 8 L3 8 Q1 6 1 3Z" fill="#c89ab8" stroke="#7a5a80" stroke-width="0.7"/><path d="M6.5 0.5 V3 M5.2 1.7 H7.8" stroke="#334" stroke-width="0.7"/><path d="M6 7 L9 9 L8.5 6.5Z" fill="#223"/></g><g transform="translate(228,27.5)"><circle cx="3.5" cy="3.5" r="2.8" fill="#dfe9f5" stroke="#5a6f98" stroke-width="1"/><path d="M5.6 5.6 L8.6 8.8" stroke="#3a3f55" stroke-width="1.5"/><path d="M7 0.5 V3 M5.8 1.7 H8.2" stroke="#445" stroke-width="0.7"/></g><g transform="translate(241,27.5)"><circle cx="3.5" cy="3.5" r="2.8" fill="#dfe9f5" stroke="#5a6f98" stroke-width="1"/><path d="M5.6 5.6 L8.6 8.8" stroke="#3a3f55" stroke-width="1.5"/><rect x="1.8" y="2" width="3.3" height="2.8" fill="#7a8ab0"/><path d="M7.5 7.5 L9.5 9.5 L9.5 7.5Z" fill="#111"/></g><g transform="translate(254,27.5)"><circle cx="3.5" cy="3.5" r="2.8" fill="#dfe9f5" stroke="#5a6f98" stroke-width="1"/><path d="M5.6 5.6 L8.6 8.8" stroke="#3a3f55" stroke-width="1.5"/><path d="M1.5 2 Q4 0.5 6.5 2.5 L5.5 4 Q3.5 2.5 1.5 2Z" fill="#2a4f98"/></g><g transform="translate(270,27.5)"><rect x="0.5" y="0.5" width="3.5" height="3.5" fill="#c04040"/><rect x="4.8" y="0.5" width="3.7" height="3.5" fill="#4a78c0"/><rect x="0.5" y="4.8" width="8" height="4" fill="#e8e8ee" stroke="#667" stroke-width="0.6"/><path d="M6 3 L8.5 8" stroke="#222" stroke-width="0.8"/></g><g transform="translate(283,27.5)"><rect x="0.5" y="0.5" width="8.2" height="8.2" fill="#5a8ac8" stroke="#2f5a98" stroke-width="0.8"/><path d="M3.2 0.5 V8.7 M0.5 4.5 H8.7 M6 0.5 V8.7" stroke="#e8f0fa" stroke-width="0.8"/></g><g transform="translate(295.5,27.5)"><rect x="0.5" y="0.5" width="5" height="8.2" fill="#5a8ac8" stroke="#2f5a98" stroke-width="0.8"/><path d="M1.5 2.5 H4.5 M1.5 4.5 H4.5 M1.5 6.5 H4.5" stroke="#e8f0fa" stroke-width="0.7"/><path d="M6 3 Q8.5 4 8.5 8.5" stroke="#445" stroke-width="1" fill="none"/></g><g transform="translate(308,27.5)"><path d="M0.5 5 L5 2 L9 4 L4.5 7Z" fill="#9ab0c8" stroke="#5a708a" stroke-width="0.6"/><path d="M0.5 6.5 L5 3.5 L9 5.5 L4.5 8.5Z" fill="#7a95b5" stroke="#4a607a" stroke-width="0.6"/><path d="M3 1 L8 1 L8 3.5" fill="#b8c8d8" stroke="#5a708a" stroke-width="0.5"/></g><g transform="translate(321,27.5)"><rect x="0.5" y="0.5" width="6.5" height="7" fill="#e8c0c8" stroke="#b06a80" stroke-width="0.7"/><path d="M1.5 2 L5.5 6 M5.5 2 L1.5 6" stroke="#c04060" stroke-width="1"/><rect x="5" y="4" width="3.8" height="4.8" fill="#d8a0b0" stroke="#905a70" stroke-width="0.6"/></g><g transform="translate(334.5,27.5)"><rect x="1" y="0.3" width="6.8" height="8.7" fill="#2a2622" stroke="#111" stroke-width="0.5"/><rect x="2" y="1.2" width="4.8" height="1.8" fill="#b8c0a8"/><path d="M2 4.5 H6.8 M2 6 H6.8 M2 7.5 H6.8" stroke="#8a8070" stroke-width="0.7" stroke-dasharray="1 0.8"/></g><g transform="translate(350,27.5)"><rect x="0.3" y="0.3" width="8.8" height="8.8" rx="1.2" fill="#2f5fb8" stroke="#1f3f88" stroke-width="0.6"/><text x="2.3" y="7.6" font-size="8" font-weight="bold" fill="#fff" font-family="Liberation Sans, sans-serif">?</text></g><g transform="translate(373,27.5)"><text x="0" y="8.5" font-size="10.5" font-weight="bold" font-style="italic" fill="#1a1a1a" font-family="Liberation Serif, serif">A</text><path d="M5 7 L9.5 4" stroke="#1a1a1a" stroke-width="1.6"/></g><g transform="translate(444.5,27.5)"><path d="M0.5 8 L5 5.5 L9.5 0.5 L9.5 8Z" fill="#1a1a1a"/><path d="M0 8.8 H10" stroke="#1a1a1a" stroke-width="0.8"/><path d="M1.5 5 L4 7.5" stroke="#1a1a1a" stroke-width="0.8"/></g><g transform="translate(516,27.5)"><rect x="0.5" y="1.5" width="7" height="7" fill="#a8c0e0" stroke="#3a5a8a" stroke-width="0.8"/><rect x="0.5" y="1.5" width="7" height="2" fill="#3a5a8a"/><path d="M4 9 L9 1" stroke="#1a1a1a" stroke-width="1.5"/></g><g transform="translate(9,43)"><rect x="0.5" y="0.8" width="7" height="6" fill="#f0f4fa" stroke="#3a5a8a" stroke-width="0.9"/><rect x="2.5" y="3.5" width="6.2" height="5.2" fill="#fff" stroke="#3a5a8a" stroke-width="0.9"/><circle cx="5.6" cy="6.2" r="1.6" fill="#3a5a8a"/></g><g transform="translate(25.5,43)"><path d="M0.5 3 L3 0.8 H8.5 V6 L6 8.5 H0.5Z" fill="#ffffff" stroke="#3a5a8a" stroke-width="0.8"/><path d="M0.5 3 H6 L8.5 0.8 M6 3 V8.5" fill="none" stroke="#3a5a8a" stroke-width="0.7"/><path d="M6 3 L8.5 0.8 V6 L6 8.5Z" fill="#9db7d6" stroke="#3a5a8a" stroke-width="0.5"/><path d="M0.5 3 L3 0.8 H8.5 L6 3Z" fill="#2f62a8" stroke="#3a5a8a" stroke-width="0.5"/></g><g transform="translate(38,43)"><path d="M0.5 3 L3 0.8 H8.5 V6 L6 8.5 H0.5Z" fill="#9db7d6" stroke="#3a5a8a" stroke-width="0.8"/><path d="M0.5 3 H6 L8.5 0.8 M6 3 V8.5" fill="none" stroke="#3a5a8a" stroke-width="0.7"/><path d="M6 3 L8.5 0.8 V6 L6 8.5Z" fill="#dfe8f2" stroke="#3a5a8a" stroke-width="0.5"/><path d="M0.5 3 L3 0.8 H8.5 L6 3Z" fill="#dfe8f2" stroke="#3a5a8a" stroke-width="0.5"/><path d="M0.5 8.5 H6 L8.5 6" stroke="#2f62a8" stroke-width="1.4" fill="none"/></g><g transform="translate(51,43)"><path d="M0.5 3 L3 0.8 H8.5 V6 L6 8.5 H0.5Z" fill="#2f62a8" stroke="#3a5a8a" stroke-width="0.8"/><path d="M0.5 3 H6 L8.5 0.8 M6 3 V8.5" fill="none" stroke="#3a5a8a" stroke-width="0.7"/><path d="M6 3 L8.5 0.8 V6 L6 8.5Z" fill="#dfe8f2" stroke="#3a5a8a" stroke-width="0.5"/><path d="M0.5 3 L3 0.8 H8.5 L6 3Z" fill="#dfe8f2" stroke="#3a5a8a" stroke-width="0.5"/></g><g transform="translate(63.5,43)"><path d="M0.5 3 L3 0.8 H8.5 V6 L6 8.5 H0.5Z" fill="#ffffff" stroke="#3a5a8a" stroke-width="0.8"/><path d="M0.5 3 H6 L8.5 0.8 M6 3 V8.5" fill="none" stroke="#3a5a8a" stroke-width="0.7"/><path d="M6 3 L8.5 0.8 V6 L6 8.5Z" fill="#2f62a8" stroke="#3a5a8a" stroke-width="0.5"/><path d="M0.5 3 L3 0.8 H8.5 L6 3Z" fill="#dfe8f2" stroke="#3a5a8a" stroke-width="0.5"/></g><g transform="translate(76.5,43)"><path d="M0.5 3 L3 0.8 H8.5 V6 L6 8.5 H0.5Z" fill="#2f62a8" stroke="#3a5a8a" stroke-width="0.8"/><path d="M0.5 3 H6 L8.5 0.8 M6 3 V8.5" fill="none" stroke="#3a5a8a" stroke-width="0.7"/><path d="M6 3 L8.5 0.8 V6 L6 8.5Z" fill="#7fa3d0" stroke="#3a5a8a" stroke-width="0.5"/><path d="M0.5 3 L3 0.8 H8.5 L6 3Z" fill="#dfe8f2" stroke="#3a5a8a" stroke-width="0.5"/></g><g transform="translate(89.5,43)"><path d="M0.5 3 L3 0.8 H8.5 V6 L6 8.5 H0.5Z" fill="#dfe8f2" stroke="#3a5a8a" stroke-width="0.8"/><path d="M0.5 3 H6 L8.5 0.8 M6 3 V8.5" fill="none" stroke="#3a5a8a" stroke-width="0.7"/><path d="M6 3 L8.5 0.8 V6 L6 8.5Z" fill="#dfe8f2" stroke="#3a5a8a" stroke-width="0.5"/><path d="M0.5 3 L3 0.8 H8.5 L6 3Z" fill="#dfe8f2" stroke="#3a5a8a" stroke-width="0.5"/><rect x="2.2" y="0.5" width="6.5" height="5" fill="#2f62a8"/><rect x="0.5" y="3" width="5.5" height="5.5" fill="#f4f7fc" stroke="#3a5a8a" stroke-width="0.7"/></g><g transform="translate(105,43)"><path d="M4.5 0.3 L8.6 2.6 V6.6 L4.5 9 L0.4 6.6 V2.6Z" fill="#e6eef8" stroke="#3a5a8a" stroke-width="0.7"/><path d="M0.4 2.6 L4.5 5 L8.6 2.6 M4.5 5 V9" fill="none" stroke="#3a5a8a" stroke-width="0.6"/><path d="M0.4 2.6 L4.5 5 V9 L0.4 6.6Z" fill="#2f62a8"/></g><g transform="translate(118,43)"><path d="M4.5 0.3 L8.6 2.6 V6.6 L4.5 9 L0.4 6.6 V2.6Z" fill="#e6eef8" stroke="#3a5a8a" stroke-width="0.7"/><path d="M0.4 2.6 L4.5 5 L8.6 2.6 M4.5 5 V9" fill="none" stroke="#3a5a8a" stroke-width="0.6"/><path d="M8.6 2.6 L4.5 5 V9 L8.6 6.6Z" fill="#2f62a8"/></g><g transform="translate(131,43)"><path d="M4.5 0.3 L8.6 2.6 V6.6 L4.5 9 L0.4 6.6 V2.6Z" fill="#e6eef8" stroke="#3a5a8a" stroke-width="0.7"/><path d="M0.4 2.6 L4.5 5 L8.6 2.6 M4.5 5 V9" fill="none" stroke="#3a5a8a" stroke-width="0.6"/><path d="M8.6 2.6 L4.5 0.3 L4.5 5Z" fill="#2f62a8"/><path d="M8.6 2.6 L4.5 5 V9 L8.6 6.6Z" fill="#7fa3d0"/></g><g transform="translate(143.5,43)"><path d="M4.5 0.3 L8.6 2.6 V6.6 L4.5 9 L0.4 6.6 V2.6Z" fill="#e6eef8" stroke="#3a5a8a" stroke-width="0.7"/><path d="M0.4 2.6 L4.5 5 L8.6 2.6 M4.5 5 V9" fill="none" stroke="#3a5a8a" stroke-width="0.6"/><path d="M0.4 2.6 L4.5 0.3 L4.5 5Z" fill="#2f62a8"/><path d="M0.4 2.6 L4.5 5 V9 L0.4 6.6Z" fill="#7fa3d0"/></g><g transform="translate(159,43)"><path d="M0.5 2.5 H3 L4 1 H7 L8 2.5 H10 V8.8 H0.5Z" fill="#3a3f4a" stroke="#222" stroke-width="0.5"/><path d="M2 8 L5 4 L7 6.5 L8 5.5 L9.5 8Z" fill="#9ab8d8"/><rect x="1.5" y="3.3" width="7.5" height="1" fill="#c8d0dc"/></g><g transform="translate(175.5,43)"><circle cx="4.5" cy="4.5" r="3.8" fill="#eef3fa" stroke="#5a7fb5" stroke-width="0.9"/><circle cx="4.5" cy="4.5" r="1.6" fill="#4a78c0"/></g><g transform="translate(106,59.5)"><rect x="0.5" y="0.5" width="8.5" height="8.5" fill="#6a6f78" stroke="#333" stroke-width="0.6"/><circle cx="4.7" cy="4.7" r="2.6" fill="#c8ccd5" stroke="#333" stroke-width="0.8"/><circle cx="4.7" cy="4.7" r="0.9" fill="#444"/></g><g transform="translate(119,59.5)"><rect x="0.8" y="2" width="8" height="7" fill="#22252c" stroke="#111" stroke-width="0.5"/><rect x="2" y="0.8" width="3" height="2" fill="#444"/><rect x="6.5" y="0.5" width="1.5" height="2" fill="#c03030"/></g><g transform="translate(141,59.5)"><path d="M0.5 5.2 L5 3 L10 5 L5.5 7.3Z" fill="#b8c4d4" stroke="#7a8aa0" stroke-width="0.5"/><path d="M0.5 3.7 L5 1.5 L10 3.5 L5.5 5.8Z" fill="#cfd8e6" stroke="#7a8aa0" stroke-width="0.5"/><path d="M0.5 6.7 L5 4.5 L10 6.5 L5.5 8.8Z" fill="#9aa8bc" stroke="#6a7a90" stroke-width="0.5"/></g><g transform="translate(156,59.5)"><path d="M2.5 0.5 Q5 0.5 5 3 Q5 4.5 4 5.5 V7 H1.5 V5.5 Q0.3 4.5 0.3 3 Q0.3 0.5 2.5 0.5Z" fill="#f6f0b0" stroke="#a09a50" stroke-width="0.6"/><rect x="1.6" y="7" width="2.2" height="1.5" fill="#889"/></g><g transform="translate(164.5,59.5)"><circle cx="4" cy="4" r="3.6" fill="#e8dc30" stroke="#a09820" stroke-width="0.7"/></g><g transform="translate(173.5,59.5)"><circle cx="3.3" cy="3.3" r="3" fill="#b8c4d0" stroke="#8090a0" stroke-width="0.6"/><rect x="3.5" y="3.5" width="4.8" height="4.5" fill="#c8d2de" stroke="#8090a0" stroke-width="0.6"/></g><g transform="translate(183.5,59.5)"><circle cx="3.5" cy="3.5" r="3" fill="#d8d040" stroke="#908820" stroke-width="0.7"/><rect x="2.5" y="3.5" width="4.5" height="4.5" fill="#e0d848" stroke="#908820" stroke-width="0.6"/></g><g transform="translate(192,60.5)"><rect x="0.2" y="0" width="5.8" height="5.4" fill="#d8201c" stroke="#901010" stroke-width="0.5"/></g><g transform="translate(321,59.5)"><path d="M0.5 6 L5 4 L9.5 5.8 L5 8Z" fill="#e8d040" stroke="#8a7a20" stroke-width="0.5"/><path d="M0.5 4.5 L5 2.5 L9.5 4.3 L5 6.5Z" fill="#f0e070" stroke="#8a7a20" stroke-width="0.5"/><path d="M4 0.5 L9 2.5 L8 0.5Z" fill="#6a8ab0"/><path d="M1 9 L3 7" stroke="#222" stroke-width="1"/></g><g transform="translate(334,59.5)"><path d="M0.5 6.5 L5 4.5 L9.5 6.3 L5 8.5Z" fill="#7a9ac0" stroke="#4a6a90" stroke-width="0.5"/><path d="M0.5 5 L5 3 L9.5 4.8 L5 7Z" fill="#a8c0dc" stroke="#4a6a90" stroke-width="0.5"/><path d="M3 3.5 Q5 0 8 2.5" stroke="#2a4f98" stroke-width="1.3" fill="none"/></g><g transform="translate(358,60.5)"><rect x="0.2" y="0" width="5.8" height="5.4" fill="#d8201c" stroke="#901010" stroke-width="0.5"/></g><g transform="translate(10,74.5)"><path d="M1 1 L4 0.5 L5.5 3 L5.5 8.5 L3 9 L3 4Z" fill="#a8c0e0" stroke="#6a8ab8" stroke-width="0.6"/></g><g transform="translate(21,74.5)"><path d="M0.5 3 L3 0.8 H8.5 V6 L6 8.5 H0.5Z" fill="#c8d6e8" stroke="#6a85a8" stroke-width="0.8"/><path d="M0.5 3 H6 L8.5 0.8 M6 3 V8.5" fill="none" stroke="#6a85a8" stroke-width="0.7"/><path d="M6 3 L8.5 0.8 V6 L6 8.5Z" fill="#8fa8c8" stroke="#6a85a8" stroke-width="0.5"/><path d="M0.5 3 L3 0.8 H8.5 L6 3Z" fill="#e4ebf4" stroke="#6a85a8" stroke-width="0.5"/></g><g transform="translate(34,74.5)"><path d="M0.5 1 L0.5 8 L5 9 L9 7 Z" fill="#c0d0e4" stroke="#6a85a8" stroke-width="0.7"/><path d="M0.5 1 L5 9" stroke="#6a85a8" stroke-width="0.6"/><path d="M0.5 1 L4 3 L9 7" fill="none" stroke="#8aa0c0" stroke-width="0.5"/></g><g transform="translate(47,74.5)"><path d="M4.3 0.3 L8.3 7.5 Q4.3 10 0.3 7.5Z" fill="#d0dcec" stroke="#6a85a8" stroke-width="0.7"/><path d="M4.3 0.3 L6 8.8 L8.3 7.5Z" fill="#9ab0cc"/></g><g transform="translate(60,74.5)"><circle cx="4.7" cy="4.7" r="4.4" fill="url(#gsph)" stroke="#6a80a8" stroke-width="0.5"/></g><g transform="translate(73,74.5)"><path d="M0.8 2 V7.5 Q4.5 10 8.2 7.5 V2Z" fill="url(#gcyl)" stroke="#6a85a8" stroke-width="0.7"/><ellipse cx="4.5" cy="2" rx="3.7" ry="1.6" fill="#e4ebf4" stroke="#6a85a8" stroke-width="0.7"/></g><g transform="translate(86,74.5)"><ellipse cx="4.5" cy="5" rx="4.3" ry="3.4" fill="#7a9ccc" stroke="#4a6a9a" stroke-width="0.6"/><ellipse cx="4.8" cy="4.2" rx="1.8" ry="1" fill="#f0f3f8" stroke="#4a6a9a" stroke-width="0.5"/><path d="M1 4 Q4 0.5 8 3" stroke="#c8d8ec" stroke-width="1" fill="none"/></g><g transform="translate(99,74.5)"><path d="M4 0.5 L8.5 7 L5 9 L0.5 7.5Z" fill="#b8cade" stroke="#7a92b0" stroke-width="0.6"/><path d="M4 0.5 L5 9 L8.5 7Z" fill="#90a8c4"/></g><g transform="translate(111,74.5)"><path d="M0.5 7.5 l2 -1 M2.5 6 l2 -1 M4.5 4.5 l2 -1 M6.5 3 l2 -1" stroke="#4a5f88" stroke-width="1.2"/><path d="M1 6 l1.5 1.5 M3 4.5 l1.5 1.5 M5 3 l1.5 1.5" stroke="#8aa0c0" stroke-width="0.6"/></g><g transform="translate(124,74.5)"><path d="M0.5 6 L5.5 1.5 L9.5 3.5 L4.5 8.5Z" fill="#c4d2e4" stroke="#8aa0c0" stroke-width="0.6"/></g><g transform="translate(140,74.5)"><path d="M0.5 3 L3 0.8 H8.5 V6 L6 8.5 H0.5Z" fill="#ffffff" stroke="#2a3a5a" stroke-width="0.8"/><path d="M0.5 3 H6 L8.5 0.8 M6 3 V8.5" fill="none" stroke="#2a3a5a" stroke-width="0.7"/><path d="M6 3 L8.5 0.8 V6 L6 8.5Z" fill="#5a78a8" stroke="#2a3a5a" stroke-width="0.5"/><path d="M0.5 3 L3 0.8 H8.5 L6 3Z" fill="#e8eef6" stroke="#2a3a5a" stroke-width="0.5"/><path d="M7.5 0 V3" stroke="#2a3a5a" stroke-width="1"/></g><g transform="translate(153,74.5)"><path d="M4.5 0.3 L8.8 3.8 L4.5 5.5 L0.3 3.8Z" fill="#a8c0e0" stroke="#4a6a9a" stroke-width="0.6"/><path d="M0.3 5.5 L4.5 7.5 L8.8 5.5 L8.8 7 L4.5 9 L0.3 7Z" fill="#6a8ac0" stroke="#3a5a8a" stroke-width="0.5"/><path d="M4.5 1 V5" stroke="#2a3a5a" stroke-width="0.9"/></g><g transform="translate(166,74.5)"><path d="M0.5 2 Q5 1 8 7.5" stroke="#a0b4d0" stroke-width="2.2" fill="none"/><path d="M0.8 1.2 Q5.5 0.5 8.8 7" stroke="#d8e2f0" stroke-width="0.8" fill="none"/></g><g transform="translate(178.5,74.5)"><path d="M0.8 2.5 Q4.5 -0.5 8.2 2.5 L8.2 4 L0.8 4Z" fill="#3a6ab8"/><path d="M0.5 5 H8.8 V8.8 H0.5Z" fill="#5a8ad0" stroke="#2a4a88" stroke-width="0.5"/><path d="M3 6 H6.5 V8.8 H3Z" fill="#e8eef8"/></g><g transform="translate(192,74.5)"><path d="M2.5 0.5 H4.5 L6.8 8.8 H0.3Z" fill="#b8d0ec" stroke="#8aa8d0" stroke-width="0.6"/><ellipse cx="3.5" cy="3.5" rx="1.6" ry="0.7" fill="#e8f0fa"/></g><g transform="translate(207,74.5)"><ellipse cx="3.4" cy="4.5" rx="3" ry="3.3" fill="#a8cbea" stroke="#2f6fb0" stroke-width="1"/><ellipse cx="6.6" cy="4.5" rx="3" ry="3.3" fill="#a8cbea" fill-opacity="0.6" stroke="#2f6fb0" stroke-width="1"/></g><g transform="translate(220,74.5)"><ellipse cx="3.4" cy="4.5" rx="3" ry="3.3" fill="#d8e6f4" stroke="#2f6fb0" stroke-width="1"/><ellipse cx="6.6" cy="4.5" rx="3" ry="3.3" fill="#d8e6f4" fill-opacity="0.6" stroke="#2f6fb0" stroke-width="1"/></g><g transform="translate(232.5,74.5)"><ellipse cx="3.4" cy="4.5" rx="3" ry="3.3" fill="#e8f0f8" stroke="#3a70a8" stroke-width="1"/><ellipse cx="6.6" cy="4.5" rx="3" ry="3.3" fill="#e8f0f8" fill-opacity="0.6" stroke="#3a70a8" stroke-width="1"/></g><g transform="translate(249,74.5)"><circle cx="4.5" cy="5" r="3.6" fill="none" stroke="#222" stroke-width="0.9"/><circle cx="4.5" cy="1.3" r="1.2" fill="#fff" stroke="#222" stroke-width="0.7"/><circle cx="1.2" cy="7" r="1.2" fill="#fff" stroke="#222" stroke-width="0.7"/><circle cx="7.8" cy="7" r="1.2" fill="#c03030" stroke="#222" stroke-width="0.7"/><path d="M4.5 2.5 V5 L2 6.5 M4.5 5 L7 6.5" stroke="#222" stroke-width="0.7" fill="none"/></g><g transform="translate(262,74.5)"><circle cx="4.5" cy="4.5" r="4" fill="#e8d0d0" stroke="#333" stroke-width="0.9"/><ellipse cx="4.5" cy="4.5" rx="1.8" ry="4" fill="none" stroke="#b03030" stroke-width="0.8"/><path d="M0.5 4.5 H8.5" stroke="#333" stroke-width="0.8"/></g><g transform="translate(275,74.5)"><circle cx="2" cy="2.5" r="1.6" fill="none" stroke="#555" stroke-width="0.8"/><circle cx="6.5" cy="7" r="1.3" fill="none" stroke="#333" stroke-width="0.8"/><path d="M3 4 L3.5 8.5 M5 0.5 L6.5 3 L6 4.5" stroke="#556" stroke-width="0.9" fill="none"/></g><g transform="translate(297,74.5)"><rect x="0.5" y="0.5" width="8.8" height="6.5" fill="#fff" stroke="#222" stroke-width="0.9"/><path d="M3 7 L5.2 2 L7.5 7 M3.8 5.5 H6.8" stroke="#222" stroke-width="0.8" fill="none"/><path d="M2.5 8.7 H8" stroke="#222" stroke-width="1"/></g><g transform="translate(313.5,74.5)"><path d="M0.5 3.5 H6 V8.8 H0.5Z M3 1 H8.8 V6 H3Z M0.5 3.5 L3 1 M6 3.5 L8.8 1 M6 8.8 L8.8 6 M0.5 8.8 L3 6" fill="none" stroke="#222" stroke-width="0.7"/></g><g transform="translate(326,74.5)"><path d="M4.5 0.3 L8.8 2.6 V6.8 L4.5 9.2 L0.3 6.8 V2.6Z" fill="#fff" stroke="#222" stroke-width="0.8"/><path d="M0.3 2.6 L4.5 5 L8.8 2.6 M4.5 5 V9.2" fill="none" stroke="#222" stroke-width="0.7"/></g><g transform="translate(338.5,74.5)"><circle cx="4.5" cy="4.3" r="4" fill="url(#gblue)" stroke="#1a3a68" stroke-width="0.5"/><ellipse cx="4.8" cy="8.6" rx="3.5" ry="0.8" fill="#8890a0" opacity="0.7"/></g><g transform="translate(351,74.5)"><circle cx="4.5" cy="4.3" r="4.2" fill="url(#gorange)"/><ellipse cx="5" cy="8.8" rx="3.5" ry="0.7" fill="#8890a0" opacity="0.6"/></g><g transform="translate(367,74.5)"><circle cx="3.5" cy="4" r="3.3" fill="#5a9ad0" stroke="#2a5a90" stroke-width="0.7"/><rect x="4" y="3" width="4.8" height="6" fill="#a8c8e8" stroke="#2a5a90" stroke-width="0.7"/></g><g transform="translate(9,90)"><ellipse cx="3.4" cy="4.5" rx="3" ry="3.3" fill="#a8cbea" stroke="#2f6fb0" stroke-width="1"/><ellipse cx="6.6" cy="4.5" rx="3" ry="3.3" fill="#a8cbea" fill-opacity="0.6" stroke="#2f6fb0" stroke-width="1"/></g><g transform="translate(21.5,90)"><ellipse cx="3.4" cy="4.5" rx="3" ry="3.3" fill="#d8e6f4" stroke="#2f6fb0" stroke-width="1"/><ellipse cx="6.6" cy="4.5" rx="3" ry="3.3" fill="#d8e6f4" fill-opacity="0.6" stroke="#2f6fb0" stroke-width="1"/></g><g transform="translate(34.5,90)"><ellipse cx="3.4" cy="4.5" rx="3" ry="3.3" fill="#e8f0f8" stroke="#3a70a8" stroke-width="1"/><ellipse cx="6.6" cy="4.5" rx="3" ry="3.3" fill="#e8f0f8" fill-opacity="0.6" stroke="#3a70a8" stroke-width="1"/></g><g transform="translate(50,90)"><path d="M0.5 3 L3 0.8 H8.5 V6 L6 8.5 H0.5Z" fill="#ffffff" stroke="#222" stroke-width="0.8"/><path d="M0.5 3 H6 L8.5 0.8 M6 3 V8.5" fill="none" stroke="#222" stroke-width="0.7"/><path d="M6 3 L8.5 0.8 V6 L6 8.5Z" fill="#2a3a5a" stroke="#222" stroke-width="0.5"/><path d="M0.5 3 L3 0.8 H8.5 L6 3Z" fill="#dfe8f2" stroke="#222" stroke-width="0.5"/><path d="M7 0 V2.5" stroke="#222" stroke-width="1"/></g><g transform="translate(63,90)"><path d="M0.5 8.5 L3 6 M5.5 3.5 L8.5 0.5" stroke="#333" stroke-width="0.9"/><rect x="0.3" y="5.5" width="3.5" height="3.3" fill="#fff" stroke="#222" stroke-width="0.8"/><rect x="3.3" y="3" width="3" height="3" fill="#556" stroke="#222" stroke-width="0.6"/><path d="M7.5 0 V3 M6 1.5 H9" stroke="#222" stroke-width="0.7"/></g><g transform="translate(76,90)"><rect x="0.5" y="2.5" width="6" height="6.3" fill="#fff" stroke="#1a2a4a" stroke-width="1"/><path d="M0.5 2.5 L3 0.5 H9 V6.5 L6.5 8.8 M6.5 2.5 L9 0.5" fill="#3a6ab8" stroke="#1a2a4a" stroke-width="0.8"/></g><g transform="translate(89,90)"><rect x="0.5" y="2" width="6.5" height="6.8" fill="#f0d0d8" stroke="#333" stroke-width="0.9"/><path d="M0.5 2 L2.5 0.5 H9 V7 L7 8.8 M7 2 L9 0.5" fill="#e8e8ee" stroke="#333" stroke-width="0.7"/><path d="M2 3.5 L5.5 7.5 M5.5 3.5 L2 7.5" stroke="#c03050" stroke-width="1"/></g><g transform="translate(101.5,90)"><circle cx="4.5" cy="4.5" r="4" fill="#3a5a98" stroke="#1a2a4a" stroke-width="0.8"/><rect x="2.3" y="3.5" width="4.5" height="4.5" fill="#fff" stroke="#1a2a4a" stroke-width="0.7"/><path d="M2 2.5 Q4.5 0.5 7 2.5" stroke="#cfe0f5" stroke-width="0.8" fill="none"/></g><g transform="translate(114,90)"><path d="M0.5 4 L3 2.5 H6 V8.8 H0.5Z" fill="#fff" stroke="#222" stroke-width="0.9"/><path d="M4.5 2 L7 0.5 L9 3.5 L7 8 L6 8" fill="#f4f6fa" stroke="#222" stroke-width="0.8"/></g><g transform="translate(127,90)"><rect x="0.5" y="3" width="5" height="5.8" fill="#e8eef8" stroke="#1a2a4a" stroke-width="0.9"/><path d="M2.5 3 L4.5 0.5 H9 V5.5 L5.5 6" fill="#3a6ab8" stroke="#1a2a4a" stroke-width="0.8"/></g><g transform="translate(139.5,90)"><rect x="0.5" y="1.5" width="3.5" height="7" fill="#2a7a4a" stroke="#1a3a2a" stroke-width="0.7"/><path d="M4 2.5 L6 0.5 H9.5 V6.5 L8 8.5 H4Z" fill="#3a9a5a" stroke="#1a3a2a" stroke-width="0.7"/><rect x="5" y="2" width="3" height="3" fill="#cfe8d8"/></g><g transform="translate(156,90)"><path d="M0.5 1.5 V8.8 H2" stroke="#222" stroke-width="1" fill="none"/><rect x="2.5" y="3" width="5.5" height="5.8" fill="#5a8ac8" stroke="#1a2a4a" stroke-width="0.9"/><path d="M2.5 3 L4.5 1 H9.5 V6.5 L8 8.8 M8 3 L9.5 1" fill="#a8c4e4" stroke="#1a2a4a" stroke-width="0.7"/></g><g transform="translate(168.5,90)"><rect x="0.5" y="1" width="2.5" height="7.5" fill="#2a5a3a" stroke="#1a2a1a" stroke-width="0.6"/><path d="M3.5 3 L5.5 1 H9.5 V6.5 L8 8.5 H3.5Z" fill="#f4e8e8" stroke="#333" stroke-width="0.8"/><circle cx="5.5" cy="4" r="1.8" fill="#c04040"/></g><g transform="translate(185,90)"><path d="M2 2 Q5 0.5 6 4 L5 8" stroke="#c05070" stroke-width="1" fill="none"/><path d="M6 3 L8 6 L5.5 6.5Z" fill="#445"/><circle cx="3" cy="6" r="1.2" fill="#d8a0b0"/></g><g transform="translate(198,90)"><path d="M0.5 8.8 V4 H3 V8.8Z M3 8.8 V2 H5.5 V8.8Z" fill="#c8b050" stroke="#7a6a30" stroke-width="0.5"/><path d="M5 8.8 L7 1 L9 8.8Z" fill="#e8b830" stroke="#8a6a20" stroke-width="0.6"/></g><g transform="translate(210.5,90)"><path d="M0.5 3 Q2.5 0.5 4 3 V8.5 H0.5Z" fill="#4a5568" stroke="#2a3548" stroke-width="0.5"/><path d="M5 3 Q7 0.5 8.8 3 V8.5 H5Z" fill="#5a6578" stroke="#2a3548" stroke-width="0.5"/></g><g transform="translate(223,90)"><path d="M0.5 2.5 L2.5 0.5 H9 V7 L7 9 H0.5Z" fill="#3a6ab0" stroke="#1a3a6a" stroke-width="0.8"/><rect x="2.3" y="3.3" width="4" height="4.2" fill="#a8c4e4" stroke="#1a3a6a" stroke-width="0.6"/></g><g transform="translate(236,90)"><path d="M3.5 0.8 H9 V5 L6.5 7 H3.5Z" fill="#4a7ab8" stroke="#2a4a80" stroke-width="0.7"/><path d="M0.5 4.5 L2.5 7.5 L6 3" stroke="#2a8a5a" stroke-width="1.5" fill="none"/><path d="M2 7 Q4 9.5 7 8" stroke="#5a8ac0" stroke-width="1" fill="none"/></g></svg>
<svg style="position:absolute;left:0;top:100px" width="800" height="320" viewBox="0 100 800 320"><g transform="translate(3,110.0)"><path d="M0.5 8 L8 0.8" stroke="#1a1a1a" stroke-width="1"/></g><g transform="translate(3,122.2)"><path d="M0.5 8.5 L8 1" stroke="#1a1a1a" stroke-width="1"/><circle cx="1" cy="8" r="0.9" fill="#1a1a1a"/><circle cx="7.8" cy="1.2" r="0.9" fill="#1a1a1a"/></g><g transform="translate(3,134.4)"><path d="M0.5 7 H5.5 Q8.5 6.5 7.5 3.5 L6.5 2" stroke="#1a1a1a" stroke-width="1.1" fill="none"/></g><g transform="translate(3,146.7)"><path d="M4.5 0.8 L8.5 3.8 L7 8.3 H2 L0.5 3.8Z" stroke="#1a1a1a" stroke-width="0.9" fill="none"/></g><g transform="translate(3,158.9)"><path d="M1 2.5 L8.5 2 V7 L0.5 7.5Z" stroke="#1a1a1a" stroke-width="0.9" fill="none"/></g><g transform="translate(3,171.1)"><path d="M0.8 8.5 Q1 2 8 1" stroke="#1a1a1a" stroke-width="1.1" fill="none"/></g><g transform="translate(3,183.3)"><circle cx="4.5" cy="4.7" r="3.8" stroke="#1a1a1a" stroke-width="0.9" fill="none"/><path d="M4.5 4.7 L7 2.5" stroke="#1a1a1a" stroke-width="0.8"/></g><g transform="translate(3,195.5)"><path d="M2.5 1 Q5 -0.5 6.5 1.5 Q9 2.5 8 5 Q9 8 6 8 Q4 9.5 2.5 8 Q0 7.5 1 5 Q-0.5 2.5 2.5 1Z" stroke="#1a1a1a" stroke-width="0.9" fill="none"/></g><g transform="translate(3,207.8)"><path d="M0.5 7.5 Q2 2 4.5 5 Q7 8 8.5 1.5" stroke="#1a1a1a" stroke-width="0.9" fill="none"/></g><g transform="translate(3,220.0)"><ellipse cx="4.5" cy="4.7" rx="4" ry="2.6" stroke="#1a1a1a" stroke-width="1" fill="none"/></g><g transform="translate(3,232.2)"><path d="M1 6 Q0 2 4.5 2 Q8.5 2.5 8 5.5 Q7 7.5 5 7.3" stroke="#3a6ab0" stroke-width="1" fill="none"/></g><g transform="translate(3,244.4)"><rect x="1" y="1" width="4.5" height="4.5" fill="#dfe8f2" stroke="#456" stroke-width="0.8"/><rect x="3.5" y="3.5" width="4.5" height="4.5" fill="#8fa8c8" stroke="#345" stroke-width="0.8"/><path d="M6 8.8 L8.8 8.8 L8.8 6" stroke="#1a1a1a" stroke-width="0.8" fill="none"/></g><g transform="translate(3,256.6)"><rect x="1" y="1.5" width="3.5" height="3.5" fill="none" stroke="#345" stroke-width="0.8"/><circle cx="6" cy="6" r="2.2" fill="none" stroke="#345" stroke-width="0.8"/><path d="M1 0 V2 M0 1 H2" stroke="#1a1a1a" stroke-width="0.6"/></g><g transform="translate(3,268.9)"><circle cx="4.5" cy="5" r="0.8" fill="#1a1a1a"/></g><g transform="translate(3,281.1)"><path d="M1 1 V8.5 M8 1 V8.5 M0 2.5 H9 M0 7 H9" stroke="#3a6ab0" stroke-width="0.9"/><path d="M2 3.5 L7 6 M2 6 L5 7" stroke="#3a6ab0" stroke-width="0.5"/></g><g transform="translate(3,293.3)"><rect x="1.2" y="2.5" width="6.6" height="4.5" fill="#222"/><path d="M1 1 V8.5 M8 1 V8.5 M0 2.5 H9 M0 7 H9" stroke="#1a1a1a" stroke-width="0.9"/></g><g transform="translate(3,305.5)"><rect x="0.5" y="1.5" width="8" height="6.5" fill="#cfe0f4" stroke="#3a6ab0" stroke-width="0.9"/><circle cx="5" cy="5" r="2" fill="#fff" stroke="#3a6ab0" stroke-width="0.7"/></g><g transform="translate(3,317.7)"><rect x="0.5" y="1" width="8" height="7.5" fill="#a8c4e8" stroke="#3a6ab0" stroke-width="0.9"/><path d="M0.5 3 H8.5 M3.2 1 V8.5 M5.8 1 V8.5" stroke="#2a4a88" stroke-width="0.7"/></g><g transform="translate(3,330.0)"><text x="0.3" y="9" font-size="11" fill="#1a1a1a" font-family="Liberation Sans, sans-serif">A</text></g><g transform="translate(17.5,110.0)"><path d="M1 8 L6 2 L8.5 1 L8 3.5 L3 8.5Z" fill="#e8d8a0" stroke="#8a7a50" stroke-width="0.6"/><path d="M0.5 8.8 H7" stroke="#555" stroke-width="0.8"/></g><g transform="translate(17.5,122.2)"><circle cx="2.5" cy="2.5" r="1.8" fill="none" stroke="#1a1a1a" stroke-width="0.9"/><circle cx="6.5" cy="2.5" r="1.5" fill="none" stroke="#1a1a1a" stroke-width="0.9"/><circle cx="5" cy="6.8" r="1.8" fill="none" stroke="#1a1a1a" stroke-width="0.9"/></g><g transform="translate(17.5,134.4)"><path d="M4 0.5 L0.8 8 H4Z M5.2 0.5 L8.4 8 H5.2Z" fill="#dde" stroke="#334" stroke-width="0.8"/></g><g transform="translate(17.5,146.7)"><path d="M0.5 8 Q1 2 4.5 2 Q8 2 8.5 8Z" fill="#a8c0d8" stroke="#456" stroke-width="0.8"/><path d="M2.5 8 Q3 4.5 4.5 4.5 Q6 4.5 6.5 8" fill="#f8f8f8" stroke="#456" stroke-width="0.7"/></g><g transform="translate(17.5,158.9)"><rect x="0.7" y="0.7" width="3" height="3" fill="none" stroke="#345" stroke-width="0.9"/><rect x="5.3" y="0.7" width="3" height="3" fill="none" stroke="#345" stroke-width="0.9"/><rect x="0.7" y="5.3" width="3" height="3" fill="none" stroke="#345" stroke-width="0.9"/><rect x="5.3" y="5.3" width="3" height="3" fill="none" stroke="#345" stroke-width="0.9"/></g><g transform="translate(17.5,171.1)"><path d="M4.5 0.3 L6 2 H5 V4 H7 V3 L8.8 4.5 L7 6 V5 H5 V7 H6 L4.5 8.8 L3 7 H4 V5 H2 V6 L0.3 4.5 L2 3 V4 H4 V2 H3Z" fill="#3a6ab0"/></g><g transform="translate(17.5,183.3)"><path d="M6.5 1.5 Q9.5 5 6 8 Q2.5 9.5 1 6 Q0.5 3 3 1.5" fill="none" stroke="#234" stroke-width="1.1"/><path d="M1.5 0.2 L4.5 1.5 L2.5 3.5Z" fill="#234"/></g><g transform="translate(17.5,195.5)"><rect x="0.7" y="0.7" width="7.8" height="7.8" fill="none" stroke="#567" stroke-width="0.8"/><rect x="0.7" y="4" width="4.5" height="4.5" fill="#cfdcec" stroke="#567" stroke-width="0.8"/></g><g transform="translate(17.5,207.8)"><path d="M1 8.5 L2.5 0.8 H5 L8 8.5Z" fill="none" stroke="#345" stroke-width="0.9"/><path d="M3 8.5 V3 H5" fill="none" stroke="#345" stroke-width="0.6"/></g><g transform="translate(17.5,220.0)"><path d="M0.5 5.5 H8.5 M5.5 0.5 L3.5 8.5" stroke="#567" stroke-width="0.8"/></g><g transform="translate(17.5,232.2)"><path d="M0.5 5 H5 M7.5 0.5 L5.5 8.5" stroke="#567" stroke-width="0.8"/><path d="M5.5 5 H7" stroke="#567" stroke-width="0.6" stroke-dasharray="1 0.6"/></g><g transform="translate(17.5,244.4)"><rect x="0.7" y="1.5" width="8" height="6.3" fill="none" stroke="#234" stroke-width="1"/></g><g transform="translate(17.5,256.6)"><path d="M3.5 1.5 H0.7 V7.8 H8.7 V1.5 H6" fill="none" stroke="#234" stroke-width="1"/></g><g transform="translate(17.5,268.9)"><path d="M0.3 4.5 H3.5 M5.5 4.5 H8.8" stroke="#1a1a1a" stroke-width="1.2"/><path d="M2.5 3 L4.3 4.5 L2.5 6Z M6.5 3 L4.7 4.5 L6.5 6Z" fill="#1a1a1a"/></g><g transform="translate(17.5,281.1)"><path d="M0.8 8.5 V4.5 L4.5 1 H8.5" fill="none" stroke="#456" stroke-width="1"/></g><g transform="translate(17.5,293.3)"><path d="M0.8 8.5 V5 Q1 1.2 5 1 H8.5" fill="none" stroke="#456" stroke-width="1"/></g><g transform="translate(17.5,305.5)"><path d="M1 8 L7.5 1.5" stroke="#c03030" stroke-width="0.9"/><circle cx="3.5" cy="5" r="1.6" fill="#e8a040"/><path d="M5 3 L8 4.5 M4.5 6.5 L6 8.5 M2 3 L0.8 1.5" stroke="#d07020" stroke-width="0.8"/></g><g transform="translate(774,109.2)"><path d="M1.5 4.5 H7" stroke="#3a6ab0" stroke-width="1"/><circle cx="1.2" cy="4.5" r="0.9" fill="#3a6ab0"/><circle cx="7.6" cy="4.5" r="1.3" fill="#fff" stroke="#3a6ab0" stroke-width="0.7"/></g><g transform="translate(774,122.7)"><path d="M1.5 8 V2 H6.5" stroke="#345" stroke-width="1.1" fill="none"/><circle cx="1.5" cy="8" r="0.9" fill="#345"/><circle cx="7.5" cy="2" r="1.2" fill="#fff" stroke="#345" stroke-width="0.7"/></g><g transform="translate(774,136.2)"><path d="M1 8.5 L7 2.5" stroke="#345" stroke-width="0.9"/><circle cx="7.6" cy="1.8" r="1.2" fill="#fff" stroke="#345" stroke-width="0.7"/><circle cx="1" cy="8.5" r="0.8" fill="#345"/></g><g transform="translate(774,149.2)"><path d="M0.5 8.5 L8.5 0.5" stroke="#345" stroke-width="0.9"/><circle cx="4.5" cy="4.5" r="1.2" fill="#345"/></g><g transform="translate(774,161.2)"><path d="M1 1 L8 8 M8 1 L1 8" stroke="#234" stroke-width="1"/></g><g transform="translate(774,174.2)"><path d="M1 1 L8 8 M8 1 L1 8" stroke="#456" stroke-width="0.8"/></g><g transform="translate(774,186.2)"><path d="M2 4.5 H7" stroke="#456" stroke-width="0.8"/></g><g transform="translate(774,201.2)"><circle cx="4.5" cy="4.5" r="3.8" fill="#dfe8f4" stroke="#3a6ab0" stroke-width="0.9"/><circle cx="4.5" cy="4.5" r="1.3" fill="#3a6ab0"/></g><g transform="translate(774,213.2)"><circle cx="4.5" cy="4.5" r="3.3" fill="none" stroke="#3a6ab0" stroke-width="0.9"/><path d="M4.5 0 L5.7 1.5 H3.3Z M4.5 9 L5.7 7.5 H3.3Z M0 4.5 L1.5 3.3 V5.7Z M9 4.5 L7.5 3.3 V5.7Z" fill="#3a6ab0"/></g><g transform="translate(774,226.2)"><circle cx="4.5" cy="5" r="3.5" fill="none" stroke="#345" stroke-width="0.9"/><path d="M2 1.2 H9" stroke="#345" stroke-width="0.8"/></g><g transform="translate(774,241.2)"><path d="M0.5 7 H8.5 M4.5 7 V1" stroke="#345" stroke-width="0.9"/></g><g transform="translate(774,253.2)"><path d="M1 8.5 L6 1 M3.5 9 L8.5 1.5" stroke="#234" stroke-width="1"/></g><g transform="translate(774,266.2)"><rect x="1" y="1.5" width="4" height="3.5" fill="none" stroke="#567" stroke-width="0.8"/><circle cx="6" cy="6" r="2" fill="#cfdcec" stroke="#567" stroke-width="0.8"/></g><g transform="translate(774,278.2)"><circle cx="4.5" cy="4.5" r="1" fill="none" stroke="#789" stroke-width="0.7"/></g><g transform="translate(774,293.2)"><path d="M1 8.5 L7 2 M4.5 3 Q7 3 7.5 6" stroke="#234" stroke-width="0.9" fill="none"/></g><g transform="translate(774,306.2)"><path d="M1 8 Q2 1 6 2 Q8 4 4 6 L8 8" stroke="#b03030" stroke-width="1" fill="none"/><path d="M1.5 2 L7 8" stroke="#777" stroke-width="0.7"/></g><g transform="translate(774,319.2)"><path d="M1.5 8.5 V4 Q1.5 1 4.5 1 Q7 1 7 4 V6" stroke="#c02020" stroke-width="1.4" fill="none"/><rect x="6.5" y="7" width="2" height="2" fill="#567"/></g><g transform="translate(788,109.2)"><path d="M1 0.5 V8.5 M9.5 0.5 V8.5 M1 2.5 H9.5" stroke="#1a1a1a" stroke-width="1.2" fill="none"/></g><g transform="translate(788,121.7)"><path d="M1.5 2 L8 7.5 M0.3 3.5 L2.8 0.8 M6.8 8.8 L9.3 6" stroke="#1a1a1a" stroke-width="1.2"/></g><g transform="translate(788,134.7)"><path d="M1 8 Q1.5 2 8 1.5" stroke="#1a1a1a" stroke-width="1.1" fill="none"/><path d="M3.5 8.5 Q4 5 8.5 4.5" stroke="#456" stroke-width="1" fill="none"/><circle cx="1" cy="8" r="0.8" fill="#1a1a1a"/></g><g transform="translate(788,147.2)"><path d="M0.5 8 H9 M2 8 V3 M7.5 8 V3 M2 5 H7.5" stroke="#345" stroke-width="0.8" stroke-dasharray="1.2 0.6"/><path d="M4 0.5 L5.5 3.5 M6 0.5 L4.5 3" stroke="#345" stroke-width="0.7"/></g><g transform="translate(788,160.7)"><circle cx="4.7" cy="4.7" r="3.8" fill="none" stroke="#345" stroke-width="0.9"/><path d="M4.7 4.7 L7.3 2" stroke="#1a1a1a" stroke-width="0.9"/></g><g transform="translate(788,173.7)"><path d="M2 8 Q1 2 7 1.5" stroke="#345" stroke-width="0.9" fill="none"/><path d="M7 3 L4 5.5 L5.5 6 L3 8.5" stroke="#1a1a1a" stroke-width="1" fill="none"/></g><g transform="translate(788,186.2)"><circle cx="4.7" cy="4.7" r="3.8" fill="none" stroke="#234" stroke-width="0.9"/><path d="M2 2 L7.4 7.4" stroke="#1a1a1a" stroke-width="1.1"/></g><g transform="translate(788,198.2)"><path d="M1 8 H8.5 L3 1.5" stroke="#1a1a1a" stroke-width="1" fill="none"/><path d="M5.5 8 Q6 5.5 4.8 4" stroke="#1a1a1a" stroke-width="0.7" fill="none"/></g><g transform="translate(788,211.7)"><path d="M0.5 1 H9 V8 H0.5Z" fill="#c8b020" opacity="0.85"/><path d="M1 1 L8 7 M1 7 L4 4" stroke="#4a4410" stroke-width="1"/></g><g transform="translate(788,226.2)"><path d="M1 1 V8.5 M8.5 1 V8.5 M1 3 H8.5 M1 6.5 H5" stroke="#345" stroke-width="0.9"/></g><g transform="translate(788,238.7)"><path d="M1 0.5 V8.5 M4.8 0.5 V8.5 M8.6 0.5 V8.5 M1 4.5 H8.6" stroke="#234" stroke-width="1"/></g><g transform="translate(788,254.2)"><path d="M1 6 L4 1 L8.5 3 L5 8Z" fill="#c8b020"/><path d="M2 2 L7 7" stroke="#4a4410" stroke-width="1.1"/></g><g transform="translate(788,267.2)"><rect x="0.5" y="1" width="8.5" height="7.5" fill="#5a8ad0" stroke="#2a4a88" stroke-width="0.7"/><rect x="1.8" y="2.3" width="2.4" height="2" fill="#dfe8f8"/><rect x="5.3" y="2.3" width="2.4" height="2" fill="#dfe8f8"/><rect x="1.8" y="5.5" width="2.4" height="2" fill="#dfe8f8"/><rect x="5.3" y="5.5" width="2.4" height="2" fill="#dfe8f8"/></g><g transform="translate(788,279.2)"><circle cx="4.7" cy="4.7" r="3.9" fill="none" stroke="#1a1a1a" stroke-width="0.9"/><circle cx="4.7" cy="4.7" r="1.1" fill="#1a1a1a"/></g><g transform="translate(788,293.2)"><text x="1.5" y="6.5" font-size="8" font-weight="bold" fill="#234" font-family="Liberation Sans, sans-serif">A</text><path d="M0.5 8.3 H9.3" stroke="#1a1a1a" stroke-width="1"/></g><g transform="translate(788,306.2)"><path d="M0.5 8 H9.5" stroke="#1a1a1a" stroke-width="1"/><path d="M2 7 L8 1" stroke="#c8b020" stroke-width="1.6"/><path d="M1.5 4 L5 7.5" stroke="#1a1a1a" stroke-width="0.9"/></g><g transform="translate(788,319.2)"><path d="M1 0.5 V9 M9 0.5 V9 M1 3 H9" stroke="#1a1a1a" stroke-width="1.1"/><rect x="2.5" y="4.5" width="5" height="3" fill="#3a6ab0"/></g><g transform="translate(788,334.2)"><path d="M0.5 7.5 L5 5 L9.5 0.5 V7.5Z" fill="#1a1a1a"/><path d="M0 8.8 H10" stroke="#1a1a1a" stroke-width="0.8"/></g><g transform="translate(788.5,356)"><rect x="0.5" y="0.5" width="5.5" height="5.5" fill="#2f5fa8" stroke="#1a3a78" stroke-width="0.6"/><rect x="3" y="3" width="5.5" height="5.5" fill="#9fc0e8" stroke="#1a3a78" stroke-width="0.6"/></g><g transform="translate(788.5,369)"><rect x="0.5" y="0.5" width="5.5" height="5.5" fill="#9fc0e8" stroke="#1a3a78" stroke-width="0.6"/><rect x="3" y="3" width="5.5" height="5.5" fill="#2f5fa8" stroke="#1a3a78" stroke-width="0.6"/></g><g transform="translate(788.5,381.5)"><rect x="0.5" y="0.5" width="7.5" height="6" fill="#2f5fa8" stroke="#1a3a78" stroke-width="0.6"/><rect x="3" y="4.5" width="5.5" height="4" fill="#9fc0e8" stroke="#1a3a78" stroke-width="0.6"/></g><g transform="translate(788.5,393.5)"><rect x="0.5" y="0.5" width="6" height="6" fill="#2f5fa8" stroke="#1a3a78" stroke-width="0.6"/><rect x="2.5" y="3" width="6" height="5.5" fill="#dfe8f8" stroke="#1a3a78" stroke-width="0.6"/></g></svg>
<svg style="position:absolute;left:715px;top:378px" width="60" height="100" viewBox="715 378 60 100"><defs><linearGradient id="vg" x1="0" x2="1" y1="0" y2="0"><stop offset="0" stop-color="#5fb8be"/><stop offset="0.25" stop-color="#9cdade"/><stop offset="0.5" stop-color="#6cc4c8"/><stop offset="0.75" stop-color="#90d4d8"/><stop offset="1" stop-color="#52a4aa"/></linearGradient></defs><path d="M741.5 447 L741 424 L738.5 414 M742 440 L743 422 L747 413 M741.5 430 L735.5 416" stroke="#3f9a3a" stroke-width="1.3" fill="none"/><path d="M737.6 431.5 Q742 433 746.4 431.5 L746 441 L753.8 469.5 Q754 473.5 741.6 474 Q729.2 473.5 729.4 469.5 L737.8 441Z" fill="url(#vg)" fill-opacity="0.82" stroke="#4a9ea6" stroke-width="0.7"/><path d="M739.5 442 L733.5 471 M742 442 L741.8 473 M744.3 442 L750 471" stroke="#5fb0b4" stroke-width="0.5" opacity="0.8" fill="none"/><ellipse cx="742" cy="431.6" rx="4.4" ry="1" fill="#c8ecec" stroke="#5aa6aa" stroke-width="0.5"/><path d="M0 0 Q6.93 -8.00 0 -16.00 Q-6.93 -8.00 0 0Z" transform="translate(748.5 399.5) rotate(-50)" fill="#fbe6e6" stroke="#eab0b6" stroke-width="0.35"/><path d="M0 0 Q6.93 -8.00 0 -16.00 Q-6.93 -8.00 0 0Z" transform="translate(748.5 399.5) rotate(-18)" fill="#fbe6e6" stroke="#eab0b6" stroke-width="0.35"/><path d="M0 0 Q6.93 -8.00 0 -16.00 Q-6.93 -8.00 0 0Z" transform="translate(748.5 399.5) rotate(12)" fill="#fbe6e6" stroke="#eab0b6" stroke-width="0.35"/><path d="M0 0 Q6.93 -8.00 0 -16.00 Q-6.93 -8.00 0 0Z" transform="translate(748.5 399.5) rotate(42)" fill="#fbe6e6" stroke="#eab0b6" stroke-width="0.35"/><path d="M0 0 Q6.93 -8.00 0 -16.00 Q-6.93 -8.00 0 0Z" transform="translate(748.5 399.5) rotate(72)" fill="#fbe6e6" stroke="#eab0b6" stroke-width="0.35"/><path d="M0 0 Q6.93 -8.00 0 -16.00 Q-6.93 -8.00 0 0Z" transform="translate(748.5 399.5) rotate(-80)" fill="#fbe6e6" stroke="#eab0b6" stroke-width="0.35"/><ellipse cx="748.5" cy="394.7" rx="0.7919999999999999" ry="4.48" transform="rotate(-50 748.5 399.5)" fill="#f0b8c0" opacity="0.7"/><ellipse cx="748.5" cy="394.7" rx="0.7919999999999999" ry="4.48" transform="rotate(-18 748.5 399.5)" fill="#f0b8c0" opacity="0.7"/><ellipse cx="748.5" cy="394.7" rx="0.7919999999999999" ry="4.48" transform="rotate(12 748.5 399.5)" fill="#f0b8c0" opacity="0.7"/><ellipse cx="748.5" cy="394.7" rx="0.7919999999999999" ry="4.48" transform="rotate(42 748.5 399.5)" fill="#f0b8c0" opacity="0.7"/><ellipse cx="748.5" cy="394.7" rx="0.7919999999999999" ry="4.48" transform="rotate(72 748.5 399.5)" fill="#f0b8c0" opacity="0.7"/><ellipse cx="748.5" cy="394.7" rx="0.7919999999999999" ry="4.48" transform="rotate(-80 748.5 399.5)" fill="#f0b8c0" opacity="0.7"/><path d="M0 0 Q6.51 -7.50 0 -15.00 Q-6.51 -7.50 0 0Z" transform="translate(734.5 403.5) rotate(-58)" fill="#fbe6e6" stroke="#eab0b6" stroke-width="0.35"/><path d="M0 0 Q6.51 -7.50 0 -15.00 Q-6.51 -7.50 0 0Z" transform="translate(734.5 403.5) rotate(-25)" fill="#fbe6e6" stroke="#eab0b6" stroke-width="0.35"/><path d="M0 0 Q6.51 -7.50 0 -15.00 Q-6.51 -7.50 0 0Z" transform="translate(734.5 403.5) rotate(8)" fill="#fbe6e6" stroke="#eab0b6" stroke-width="0.35"/><path d="M0 0 Q6.51 -7.50 0 -15.00 Q-6.51 -7.50 0 0Z" transform="translate(734.5 403.5) rotate(40)" fill="#fbe6e6" stroke="#eab0b6" stroke-width="0.35"/><path d="M0 0 Q6.51 -7.50 0 -15.00 Q-6.51 -7.50 0 0Z" transform="translate(734.5 403.5) rotate(-88)" fill="#fbe6e6" stroke="#eab0b6" stroke-width="0.35"/><ellipse cx="734.5" cy="399.0" rx="0.744" ry="4.2" transform="rotate(-58 734.5 403.5)" fill="#f0b8c0" opacity="0.7"/><ellipse cx="734.5" cy="399.0" rx="0.744" ry="4.2" transform="rotate(-25 734.5 403.5)" fill="#f0b8c0" opacity="0.7"/><ellipse cx="734.5" cy="399.0" rx="0.744" ry="4.2" transform="rotate(8 734.5 403.5)" fill="#f0b8c0" opacity="0.7"/><ellipse cx="734.5" cy="399.0" rx="0.744" ry="4.2" transform="rotate(40 734.5 403.5)" fill="#f0b8c0" opacity="0.7"/><ellipse cx="734.5" cy="399.0" rx="0.744" ry="4.2" transform="rotate(-88 734.5 403.5)" fill="#f0b8c0" opacity="0.7"/><path d="M0 0 Q6.30 -7.00 0 -14.00 Q-6.30 -7.00 0 0Z" transform="translate(733 416.5) rotate(-82)" fill="#fbe6e6" stroke="#eab0b6" stroke-width="0.35"/><path d="M0 0 Q6.30 -7.00 0 -14.00 Q-6.30 -7.00 0 0Z" transform="translate(733 416.5) rotate(-50)" fill="#fbe6e6" stroke="#eab0b6" stroke-width="0.35"/><path d="M0 0 Q6.30 -7.00 0 -14.00 Q-6.30 -7.00 0 0Z" transform="translate(733 416.5) rotate(-16)" fill="#fbe6e6" stroke="#eab0b6" stroke-width="0.35"/><path d="M0 0 Q6.30 -7.00 0 -14.00 Q-6.30 -7.00 0 0Z" transform="translate(733 416.5) rotate(20)" fill="#fbe6e6" stroke="#eab0b6" stroke-width="0.35"/><path d="M0 0 Q6.30 -7.00 0 -14.00 Q-6.30 -7.00 0 0Z" transform="translate(733 416.5) rotate(-114)" fill="#fbe6e6" stroke="#eab0b6" stroke-width="0.35"/><ellipse cx="733" cy="412.3" rx="0.72" ry="3.9200000000000004" transform="rotate(-82 733 416.5)" fill="#f0b8c0" opacity="0.7"/><ellipse cx="733" cy="412.3" rx="0.72" ry="3.9200000000000004" transform="rotate(-50 733 416.5)" fill="#f0b8c0" opacity="0.7"/><ellipse cx="733" cy="412.3" rx="0.72" ry="3.9200000000000004" transform="rotate(-16 733 416.5)" fill="#f0b8c0" opacity="0.7"/><ellipse cx="733" cy="412.3" rx="0.72" ry="3.9200000000000004" transform="rotate(20 733 416.5)" fill="#f0b8c0" opacity="0.7"/><ellipse cx="733" cy="412.3" rx="0.72" ry="3.9200000000000004" transform="rotate(-114 733 416.5)" fill="#f0b8c0" opacity="0.7"/><path d="M0 0 Q6.93 -8.00 0 -16.00 Q-6.93 -8.00 0 0Z" transform="translate(749.5 411.5) rotate(-64)" fill="#fbe6e6" stroke="#eab0b6" stroke-width="0.35"/><path d="M0 0 Q6.93 -8.00 0 -16.00 Q-6.93 -8.00 0 0Z" transform="translate(749.5 411.5) rotate(-26)" fill="#fbe6e6" stroke="#eab0b6" stroke-width="0.35"/><path d="M0 0 Q6.93 -8.00 0 -16.00 Q-6.93 -8.00 0 0Z" transform="translate(749.5 411.5) rotate(12)" fill="#fbe6e6" stroke="#eab0b6" stroke-width="0.35"/><path d="M0 0 Q6.93 -8.00 0 -16.00 Q-6.93 -8.00 0 0Z" transform="translate(749.5 411.5) rotate(52)" fill="#fbe6e6" stroke="#eab0b6" stroke-width="0.35"/><path d="M0 0 Q6.93 -8.00 0 -16.00 Q-6.93 -8.00 0 0Z" transform="translate(749.5 411.5) rotate(90)" fill="#fbe6e6" stroke="#eab0b6" stroke-width="0.35"/><path d="M0 0 Q6.93 -8.00 0 -16.00 Q-6.93 -8.00 0 0Z" transform="translate(749.5 411.5) rotate(128)" fill="#fbe6e6" stroke="#eab0b6" stroke-width="0.35"/><path d="M0 0 Q6.93 -8.00 0 -16.00 Q-6.93 -8.00 0 0Z" transform="translate(749.5 411.5) rotate(-102)" fill="#fbe6e6" stroke="#eab0b6" stroke-width="0.35"/><ellipse cx="749.5" cy="406.7" rx="0.7919999999999999" ry="4.48" transform="rotate(-64 749.5 411.5)" fill="#f0b8c0" opacity="0.7"/><ellipse cx="749.5" cy="406.7" rx="0.7919999999999999" ry="4.48" transform="rotate(-26 749.5 411.5)" fill="#f0b8c0" opacity="0.7"/><ellipse cx="749.5" cy="406.7" rx="0.7919999999999999" ry="4.48" transform="rotate(12 749.5 411.5)" fill="#f0b8c0" opacity="0.7"/><ellipse cx="749.5" cy="406.7" rx="0.7919999999999999" ry="4.48" transform="rotate(52 749.5 411.5)" fill="#f0b8c0" opacity="0.7"/><ellipse cx="749.5" cy="406.7" rx="0.7919999999999999" ry="4.48" transform="rotate(90 749.5 411.5)" fill="#f0b8c0" opacity="0.7"/><ellipse cx="749.5" cy="406.7" rx="0.7919999999999999" ry="4.48" transform="rotate(128 749.5 411.5)" fill="#f0b8c0" opacity="0.7"/><ellipse cx="749.5" cy="406.7" rx="0.7919999999999999" ry="4.48" transform="rotate(-102 749.5 411.5)" fill="#f0b8c0" opacity="0.7"/><circle cx="749.5" cy="411.5" r="1.7" fill="#f0a050"/></svg>
</body></html>
